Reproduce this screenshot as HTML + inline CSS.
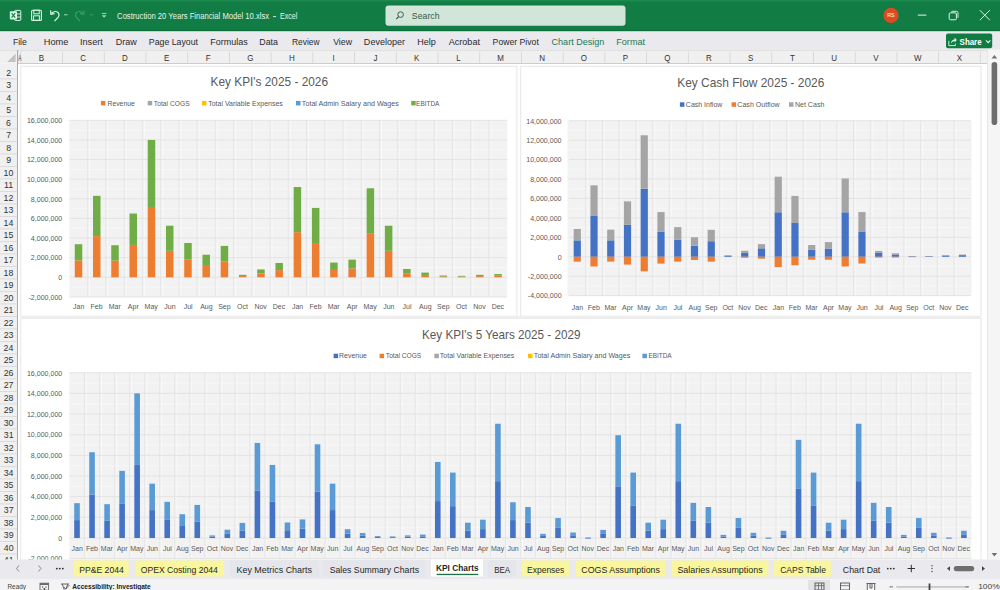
<!DOCTYPE html>
<html><head><meta charset="utf-8"><title>Excel</title>
<style>
html,body{margin:0;padding:0;width:1000px;height:590px;overflow:hidden;background:#fff;font-family:"Liberation Sans", sans-serif}
</style></head><body>
<svg width="1000" height="590" viewBox="0 0 1000 590" style="position:absolute;left:0;top:0;display:block">
<style>text{font-family:"Liberation Sans", sans-serif}</style>
<rect x="0.00" y="0.00" width="1000.00" height="590.00" fill="#ffffff"/>
<rect x="0.00" y="0.00" width="1000.00" height="31.00" fill="#117c43"/>
<rect x="0.00" y="0.00" width="1000.00" height="1.50" fill="#1a8a4f"/>
<rect x="0.00" y="30.20" width="1000.00" height="1.00" fill="#0b6a36"/>
<rect x="14.6" y="10.4" width="6.2" height="10" rx="0.8" fill="none" stroke="#d9f5e4" stroke-width="1"/>
<rect x="14.60" y="13.50" width="6.20" height="0.90" fill="#d9f5e4"/>
<rect x="14.60" y="16.60" width="6.20" height="0.90" fill="#d9f5e4"/>
<rect x="9.8" y="11.3" width="7.2" height="8.2" rx="1" fill="#d9f5e4"/>
<path d="M11.6 13.2 L15.2 17.6 M15.2 13.2 L11.6 17.6" stroke="#117c43" stroke-width="1.1"/>
<rect x="31.6" y="10.2" width="9.8" height="10.2" rx="1" fill="none" stroke="#d9f5e4" stroke-width="1.1"/>
<rect x="33.8" y="10.2" width="5.4" height="3.6" fill="none" stroke="#d9f5e4" stroke-width="1"/>
<rect x="33.6" y="15.8" width="5.8" height="4.6" fill="none" stroke="#d9f5e4" stroke-width="1"/>
<path d="M51.5 13.2 Q55 10.2 58 12.5 Q60.5 15.5 57 18.5 L54.5 21.2" fill="none" stroke="#d9f5e4" stroke-width="1.2"/>
<path d="M50.6 10.4 L50.9 14.2 L54.5 13.6" fill="none" stroke="#d9f5e4" stroke-width="1.2"/>
<rect x="64.00" y="14.30" width="3.60" height="1.00" fill="#9fd8b6"/>
<path d="M83 13.2 Q79.5 10.2 76.5 12.5 Q74 15.5 77.5 18.5 L80 21.2" fill="none" stroke="#3f9a68" stroke-width="1.2"/>
<path d="M84 10.4 L83.6 14.2 L80 13.6" fill="none" stroke="#3f9a68" stroke-width="1.2"/>
<rect x="89.80" y="14.30" width="3.40" height="1.00" fill="#3f9a68"/>
<rect x="101.80" y="13.00" width="4.60" height="0.90" fill="#a9dcbf"/>
<path d="M101.8 15.2 L106.4 15.2 L104.1 17.8 Z" fill="#a9dcbf"/>
<text x="117.12" y="19.00" font-size="8.99" fill="#e6f4ec" textLength="151.96" lengthAdjust="spacingAndGlyphs">Costruction 20 Years Financial Model 10.xlsx</text>
<rect x="273.00" y="16.20" width="3.00" height="0.90" fill="#e6f4ec"/>
<text x="279.93" y="19.00" font-size="8.99" fill="#e6f4ec" textLength="17.50" lengthAdjust="spacingAndGlyphs">Excel</text>
<rect x="385.5" y="5.6" width="240" height="20.2" rx="3" fill="#d2e5d9"/>
<circle cx="400.6" cy="14.6" r="2.8" fill="none" stroke="#3d5c49" stroke-width="1"/>
<path d="M398.6 16.6 L396.3 19" stroke="#3d5c49" stroke-width="1.1"/>
<text x="411.81" y="19.20" font-size="9.13" fill="#3d5c49" textLength="27.75" lengthAdjust="spacingAndGlyphs">Search</text>
<circle cx="891" cy="15.4" r="7.6" fill="#dd4b25"/>
<text x="887.17" y="17.30" font-size="5.22" fill="#ffffff" textLength="7.47" lengthAdjust="spacingAndGlyphs">RS</text>
<rect x="917.80" y="14.60" width="8.60" height="1.00" fill="#e6f4ec"/>
<rect x="949.2" y="12.8" width="7.2" height="7" rx="1.2" fill="none" stroke="#e6f4ec" stroke-width="1"/>
<path d="M951.4 11.3 L956.5 11.3 Q958 11.3 958 12.8 L958 17.8" fill="none" stroke="#e6f4ec" stroke-width="0.9"/>
<path d="M979.8 10.2 L989.8 20.2 M989.8 10.2 L979.8 20.2" stroke="#e6f4ec" stroke-width="1"/>
<rect x="0.00" y="31.20" width="1000.00" height="18.30" fill="#e9e9ee"/>
<rect x="0.00" y="31.20" width="1000.00" height="0.80" fill="#9fdcb9"/>
<text x="12.91" y="44.80" font-size="8.70" fill="#2b2b2b" textLength="13.84" lengthAdjust="spacingAndGlyphs">File</text>
<text x="43.76" y="44.80" font-size="8.70" fill="#2b2b2b" textLength="24.63" lengthAdjust="spacingAndGlyphs">Home</text>
<text x="79.97" y="44.80" font-size="8.70" fill="#2b2b2b" textLength="22.93" lengthAdjust="spacingAndGlyphs">Insert</text>
<text x="115.78" y="44.80" font-size="8.70" fill="#2b2b2b" textLength="21.01" lengthAdjust="spacingAndGlyphs">Draw</text>
<text x="148.80" y="44.80" font-size="8.70" fill="#2b2b2b" textLength="49.21" lengthAdjust="spacingAndGlyphs">Page Layout</text>
<text x="210.28" y="44.80" font-size="8.70" fill="#2b2b2b" textLength="37.51" lengthAdjust="spacingAndGlyphs">Formulas</text>
<text x="259.29" y="44.80" font-size="8.70" fill="#2b2b2b" textLength="18.68" lengthAdjust="spacingAndGlyphs">Data</text>
<text x="292.03" y="44.80" font-size="8.70" fill="#2b2b2b" textLength="27.46" lengthAdjust="spacingAndGlyphs">Review</text>
<text x="333.20" y="44.80" font-size="8.70" fill="#2b2b2b" textLength="18.80" lengthAdjust="spacingAndGlyphs">View</text>
<text x="363.88" y="44.80" font-size="8.70" fill="#2b2b2b" textLength="41.04" lengthAdjust="spacingAndGlyphs">Developer</text>
<text x="417.28" y="44.80" font-size="8.70" fill="#2b2b2b" textLength="18.60" lengthAdjust="spacingAndGlyphs">Help</text>
<text x="448.70" y="44.80" font-size="8.70" fill="#2b2b2b" textLength="31.31" lengthAdjust="spacingAndGlyphs">Acrobat</text>
<text x="492.61" y="44.80" font-size="8.70" fill="#2b2b2b" textLength="46.20" lengthAdjust="spacingAndGlyphs">Power Pivot</text>
<text x="551.55" y="44.80" font-size="8.70" fill="#217a55" textLength="52.81" lengthAdjust="spacingAndGlyphs">Chart Design</text>
<text x="616.27" y="44.80" font-size="8.70" fill="#217a55" textLength="28.75" lengthAdjust="spacingAndGlyphs">Format</text>
<rect x="946" y="33.6" width="46.2" height="14.7" rx="2" fill="#107c41"/>
<path d="M948.8 40.8 L948.8 45.6 L955.4 45.6 L955.4 43.6" fill="none" stroke="#d9f5e4" stroke-width="0.9"/>
<path d="M950.8 43.6 Q951.2 39.6 954.6 39.4 L954.6 37.6 L956.8 40 L954.6 42.4 L954.6 41 Q952.2 41 950.8 43.6 Z" fill="#d9f5e4"/>
<text x="959.60" y="44.70" font-size="8.99" fill="#ffffff" textLength="22.03" lengthAdjust="spacingAndGlyphs" font-weight="bold">Share</text>
<path d="M986 40.4 L988.2 42.6 L990.4 40.4" fill="none" stroke="#e6f7ec" stroke-width="1.2"/>
<rect x="0.00" y="49.50" width="1000.00" height="14.10" fill="#f0f0f0"/>
<rect x="0.00" y="49.50" width="1000.00" height="1.60" fill="#e2e2e2"/>
<rect x="18.00" y="63.10" width="970.00" height="0.90" fill="#c8c8c8"/>
<text x="38.79" y="60.80" font-size="8.41" fill="#333333" textLength="5.33" lengthAdjust="spacingAndGlyphs">B</text>
<rect x="62.12" y="51.50" width="0.80" height="12.00" fill="#d4d4d4"/>
<text x="80.35" y="60.80" font-size="8.41" fill="#333333" textLength="5.77" lengthAdjust="spacingAndGlyphs">C</text>
<rect x="103.84" y="51.50" width="0.80" height="12.00" fill="#d4d4d4"/>
<text x="121.99" y="60.80" font-size="8.41" fill="#333333" textLength="5.77" lengthAdjust="spacingAndGlyphs">D</text>
<rect x="145.56" y="51.50" width="0.80" height="12.00" fill="#d4d4d4"/>
<text x="163.91" y="60.80" font-size="8.41" fill="#333333" textLength="5.33" lengthAdjust="spacingAndGlyphs">E</text>
<rect x="187.28" y="51.50" width="0.80" height="12.00" fill="#d4d4d4"/>
<text x="205.82" y="60.80" font-size="8.41" fill="#333333" textLength="4.88" lengthAdjust="spacingAndGlyphs">F</text>
<rect x="229.00" y="51.50" width="0.80" height="12.00" fill="#d4d4d4"/>
<text x="247.15" y="60.80" font-size="8.41" fill="#333333" textLength="6.21" lengthAdjust="spacingAndGlyphs">G</text>
<rect x="270.72" y="51.50" width="0.80" height="12.00" fill="#d4d4d4"/>
<text x="288.99" y="60.80" font-size="8.41" fill="#333333" textLength="5.77" lengthAdjust="spacingAndGlyphs">H</text>
<rect x="312.44" y="51.50" width="0.80" height="12.00" fill="#d4d4d4"/>
<text x="332.48" y="60.80" font-size="8.41" fill="#333333" textLength="2.22" lengthAdjust="spacingAndGlyphs">I</text>
<rect x="354.16" y="51.50" width="0.80" height="12.00" fill="#d4d4d4"/>
<text x="373.54" y="60.80" font-size="8.41" fill="#333333" textLength="3.99" lengthAdjust="spacingAndGlyphs">J</text>
<rect x="395.88" y="51.50" width="0.80" height="12.00" fill="#d4d4d4"/>
<text x="414.09" y="60.80" font-size="8.41" fill="#333333" textLength="5.33" lengthAdjust="spacingAndGlyphs">K</text>
<rect x="437.60" y="51.50" width="0.80" height="12.00" fill="#d4d4d4"/>
<text x="456.34" y="60.80" font-size="8.41" fill="#333333" textLength="4.44" lengthAdjust="spacingAndGlyphs">L</text>
<rect x="479.32" y="51.50" width="0.80" height="12.00" fill="#d4d4d4"/>
<text x="497.15" y="60.80" font-size="8.41" fill="#333333" textLength="6.65" lengthAdjust="spacingAndGlyphs">M</text>
<rect x="521.04" y="51.50" width="0.80" height="12.00" fill="#d4d4d4"/>
<text x="539.31" y="60.80" font-size="8.41" fill="#333333" textLength="5.77" lengthAdjust="spacingAndGlyphs">N</text>
<rect x="562.76" y="51.50" width="0.80" height="12.00" fill="#d4d4d4"/>
<text x="580.83" y="60.80" font-size="8.41" fill="#333333" textLength="6.21" lengthAdjust="spacingAndGlyphs">O</text>
<rect x="604.48" y="51.50" width="0.80" height="12.00" fill="#d4d4d4"/>
<text x="622.87" y="60.80" font-size="8.41" fill="#333333" textLength="5.33" lengthAdjust="spacingAndGlyphs">P</text>
<rect x="646.20" y="51.50" width="0.80" height="12.00" fill="#d4d4d4"/>
<text x="664.27" y="60.80" font-size="8.41" fill="#333333" textLength="6.21" lengthAdjust="spacingAndGlyphs">Q</text>
<rect x="687.92" y="51.50" width="0.80" height="12.00" fill="#d4d4d4"/>
<text x="706.05" y="60.80" font-size="8.41" fill="#333333" textLength="5.77" lengthAdjust="spacingAndGlyphs">R</text>
<rect x="729.64" y="51.50" width="0.80" height="12.00" fill="#d4d4d4"/>
<text x="748.12" y="60.80" font-size="8.41" fill="#333333" textLength="5.33" lengthAdjust="spacingAndGlyphs">S</text>
<rect x="771.36" y="51.50" width="0.80" height="12.00" fill="#d4d4d4"/>
<text x="790.08" y="60.80" font-size="8.41" fill="#333333" textLength="4.88" lengthAdjust="spacingAndGlyphs">T</text>
<rect x="813.08" y="51.50" width="0.80" height="12.00" fill="#d4d4d4"/>
<text x="831.37" y="60.80" font-size="8.41" fill="#333333" textLength="5.77" lengthAdjust="spacingAndGlyphs">U</text>
<rect x="854.80" y="51.50" width="0.80" height="12.00" fill="#d4d4d4"/>
<text x="873.30" y="60.80" font-size="8.41" fill="#333333" textLength="5.33" lengthAdjust="spacingAndGlyphs">V</text>
<rect x="896.52" y="51.50" width="0.80" height="12.00" fill="#d4d4d4"/>
<text x="913.91" y="60.80" font-size="8.41" fill="#333333" textLength="7.54" lengthAdjust="spacingAndGlyphs">W</text>
<rect x="938.24" y="51.50" width="0.80" height="12.00" fill="#d4d4d4"/>
<text x="956.72" y="60.80" font-size="8.41" fill="#333333" textLength="5.33" lengthAdjust="spacingAndGlyphs">X</text>
<rect x="979.96" y="51.50" width="0.80" height="12.00" fill="#d4d4d4"/>
<rect x="20.40" y="51.50" width="0.80" height="12.00" fill="#d4d4d4"/>
<path d="M15.6 53.5 L15.6 62 L7.2 62 Z" fill="#c2c2c2"/>
<text x="18.30" y="60.80" font-size="8.41" fill="#333333" textLength="3.21" lengthAdjust="spacingAndGlyphs">A</text>
<rect x="0.00" y="63.60" width="17.80" height="496.00" fill="#f0f0f0"/>
<rect x="17.20" y="50.00" width="0.90" height="510.00" fill="#9a9a9a"/>
<text x="6.13" y="75.70" font-size="9.28" fill="#333333" textLength="4.90" lengthAdjust="spacingAndGlyphs">2</text>
<rect x="0.00" y="78.50" width="17.20" height="0.80" fill="#d6d6d6"/>
<text x="6.18" y="88.20" font-size="9.28" fill="#333333" textLength="4.90" lengthAdjust="spacingAndGlyphs">3</text>
<rect x="0.00" y="91.00" width="17.20" height="0.80" fill="#d6d6d6"/>
<text x="6.18" y="100.70" font-size="9.28" fill="#333333" textLength="4.90" lengthAdjust="spacingAndGlyphs">4</text>
<rect x="0.00" y="103.50" width="17.20" height="0.80" fill="#d6d6d6"/>
<text x="6.15" y="113.20" font-size="9.28" fill="#333333" textLength="4.90" lengthAdjust="spacingAndGlyphs">5</text>
<rect x="0.00" y="116.00" width="17.20" height="0.80" fill="#d6d6d6"/>
<text x="6.11" y="125.70" font-size="9.28" fill="#333333" textLength="4.90" lengthAdjust="spacingAndGlyphs">6</text>
<rect x="0.00" y="128.50" width="17.20" height="0.80" fill="#d6d6d6"/>
<text x="6.13" y="138.20" font-size="9.28" fill="#333333" textLength="4.90" lengthAdjust="spacingAndGlyphs">7</text>
<rect x="0.00" y="141.00" width="17.20" height="0.80" fill="#d6d6d6"/>
<text x="6.15" y="150.70" font-size="9.28" fill="#333333" textLength="4.90" lengthAdjust="spacingAndGlyphs">8</text>
<rect x="0.00" y="153.50" width="17.20" height="0.80" fill="#d6d6d6"/>
<text x="6.15" y="163.20" font-size="9.28" fill="#333333" textLength="4.90" lengthAdjust="spacingAndGlyphs">9</text>
<rect x="0.00" y="166.00" width="17.20" height="0.80" fill="#d6d6d6"/>
<text x="3.53" y="175.70" font-size="9.28" fill="#333333" textLength="9.80" lengthAdjust="spacingAndGlyphs">10</text>
<rect x="0.00" y="178.50" width="17.20" height="0.80" fill="#d6d6d6"/>
<text x="3.91" y="188.20" font-size="9.28" fill="#333333" textLength="9.15" lengthAdjust="spacingAndGlyphs">11</text>
<rect x="0.00" y="191.00" width="17.20" height="0.80" fill="#d6d6d6"/>
<text x="3.58" y="200.70" font-size="9.28" fill="#333333" textLength="9.80" lengthAdjust="spacingAndGlyphs">12</text>
<rect x="0.00" y="203.50" width="17.20" height="0.80" fill="#d6d6d6"/>
<text x="3.56" y="213.20" font-size="9.28" fill="#333333" textLength="9.80" lengthAdjust="spacingAndGlyphs">13</text>
<rect x="0.00" y="216.00" width="17.20" height="0.80" fill="#d6d6d6"/>
<text x="3.49" y="225.70" font-size="9.28" fill="#333333" textLength="9.80" lengthAdjust="spacingAndGlyphs">14</text>
<rect x="0.00" y="228.50" width="17.20" height="0.80" fill="#d6d6d6"/>
<text x="3.56" y="238.20" font-size="9.28" fill="#333333" textLength="9.80" lengthAdjust="spacingAndGlyphs">15</text>
<rect x="0.00" y="241.00" width="17.20" height="0.80" fill="#d6d6d6"/>
<text x="3.56" y="250.70" font-size="9.28" fill="#333333" textLength="9.80" lengthAdjust="spacingAndGlyphs">16</text>
<rect x="0.00" y="253.50" width="17.20" height="0.80" fill="#d6d6d6"/>
<text x="3.58" y="263.20" font-size="9.28" fill="#333333" textLength="9.80" lengthAdjust="spacingAndGlyphs">17</text>
<rect x="0.00" y="266.00" width="17.20" height="0.80" fill="#d6d6d6"/>
<text x="3.56" y="275.70" font-size="9.28" fill="#333333" textLength="9.80" lengthAdjust="spacingAndGlyphs">18</text>
<rect x="0.00" y="278.50" width="17.20" height="0.80" fill="#d6d6d6"/>
<text x="3.58" y="288.20" font-size="9.28" fill="#333333" textLength="9.80" lengthAdjust="spacingAndGlyphs">19</text>
<rect x="0.00" y="291.00" width="17.20" height="0.80" fill="#d6d6d6"/>
<text x="3.64" y="300.70" font-size="9.28" fill="#333333" textLength="9.80" lengthAdjust="spacingAndGlyphs">20</text>
<rect x="0.00" y="303.50" width="17.20" height="0.80" fill="#d6d6d6"/>
<text x="3.69" y="313.20" font-size="9.28" fill="#333333" textLength="9.80" lengthAdjust="spacingAndGlyphs">21</text>
<rect x="0.00" y="316.00" width="17.20" height="0.80" fill="#d6d6d6"/>
<text x="3.69" y="325.70" font-size="9.28" fill="#333333" textLength="9.80" lengthAdjust="spacingAndGlyphs">22</text>
<rect x="0.00" y="328.50" width="17.20" height="0.80" fill="#d6d6d6"/>
<text x="3.67" y="338.20" font-size="9.28" fill="#333333" textLength="9.80" lengthAdjust="spacingAndGlyphs">23</text>
<rect x="0.00" y="341.00" width="17.20" height="0.80" fill="#d6d6d6"/>
<text x="3.60" y="350.70" font-size="9.28" fill="#333333" textLength="9.80" lengthAdjust="spacingAndGlyphs">24</text>
<rect x="0.00" y="353.50" width="17.20" height="0.80" fill="#d6d6d6"/>
<text x="3.67" y="363.20" font-size="9.28" fill="#333333" textLength="9.80" lengthAdjust="spacingAndGlyphs">25</text>
<rect x="0.00" y="366.00" width="17.20" height="0.80" fill="#d6d6d6"/>
<text x="3.67" y="375.70" font-size="9.28" fill="#333333" textLength="9.80" lengthAdjust="spacingAndGlyphs">26</text>
<rect x="0.00" y="378.50" width="17.20" height="0.80" fill="#d6d6d6"/>
<text x="3.69" y="388.20" font-size="9.28" fill="#333333" textLength="9.80" lengthAdjust="spacingAndGlyphs">27</text>
<rect x="0.00" y="391.00" width="17.20" height="0.80" fill="#d6d6d6"/>
<text x="3.67" y="400.70" font-size="9.28" fill="#333333" textLength="9.80" lengthAdjust="spacingAndGlyphs">28</text>
<rect x="0.00" y="403.50" width="17.20" height="0.80" fill="#d6d6d6"/>
<text x="3.69" y="413.20" font-size="9.28" fill="#333333" textLength="9.80" lengthAdjust="spacingAndGlyphs">29</text>
<rect x="0.00" y="416.00" width="17.20" height="0.80" fill="#d6d6d6"/>
<text x="3.71" y="425.70" font-size="9.28" fill="#333333" textLength="9.80" lengthAdjust="spacingAndGlyphs">30</text>
<rect x="0.00" y="428.50" width="17.20" height="0.80" fill="#d6d6d6"/>
<text x="3.75" y="438.20" font-size="9.28" fill="#333333" textLength="9.80" lengthAdjust="spacingAndGlyphs">31</text>
<rect x="0.00" y="441.00" width="17.20" height="0.80" fill="#d6d6d6"/>
<text x="3.75" y="450.70" font-size="9.28" fill="#333333" textLength="9.80" lengthAdjust="spacingAndGlyphs">32</text>
<rect x="0.00" y="453.50" width="17.20" height="0.80" fill="#d6d6d6"/>
<text x="3.73" y="463.20" font-size="9.28" fill="#333333" textLength="9.80" lengthAdjust="spacingAndGlyphs">33</text>
<rect x="0.00" y="466.00" width="17.20" height="0.80" fill="#d6d6d6"/>
<text x="3.67" y="475.70" font-size="9.28" fill="#333333" textLength="9.80" lengthAdjust="spacingAndGlyphs">34</text>
<rect x="0.00" y="478.50" width="17.20" height="0.80" fill="#d6d6d6"/>
<text x="3.73" y="488.20" font-size="9.28" fill="#333333" textLength="9.80" lengthAdjust="spacingAndGlyphs">35</text>
<rect x="0.00" y="491.00" width="17.20" height="0.80" fill="#d6d6d6"/>
<text x="3.73" y="500.70" font-size="9.28" fill="#333333" textLength="9.80" lengthAdjust="spacingAndGlyphs">36</text>
<rect x="0.00" y="503.50" width="17.20" height="0.80" fill="#d6d6d6"/>
<text x="3.75" y="513.20" font-size="9.28" fill="#333333" textLength="9.80" lengthAdjust="spacingAndGlyphs">37</text>
<rect x="0.00" y="516.00" width="17.20" height="0.80" fill="#d6d6d6"/>
<text x="3.73" y="525.70" font-size="9.28" fill="#333333" textLength="9.80" lengthAdjust="spacingAndGlyphs">38</text>
<rect x="0.00" y="528.50" width="17.20" height="0.80" fill="#d6d6d6"/>
<text x="3.75" y="538.20" font-size="9.28" fill="#333333" textLength="9.80" lengthAdjust="spacingAndGlyphs">39</text>
<rect x="0.00" y="541.00" width="17.20" height="0.80" fill="#d6d6d6"/>
<text x="3.78" y="550.70" font-size="9.28" fill="#333333" textLength="9.80" lengthAdjust="spacingAndGlyphs">40</text>
<rect x="0.00" y="553.50" width="17.20" height="0.80" fill="#d6d6d6"/>
<text x="3.82" y="563.20" font-size="9.28" fill="#333333" textLength="9.80" lengthAdjust="spacingAndGlyphs">41</text>
<rect x="0.00" y="566.00" width="17.20" height="0.80" fill="#d6d6d6"/>
<rect x="18.20" y="64.00" width="970.00" height="496.00" fill="#ffffff"/>
<rect x="20.7" y="66.3" width="496.2" height="250" fill="#ffffff" stroke="#e6e6e6" stroke-width="1"/>
<rect x="520.7" y="66.3" width="460.3" height="250" fill="#ffffff" stroke="#e6e6e6" stroke-width="1"/>
<rect x="20.7" y="318.5" width="960.3" height="260" fill="#ffffff" stroke="#e6e6e6" stroke-width="1"/>
<rect x="21.00" y="316.20" width="960.00" height="2.60" fill="#eeeeee"/>
<text x="210.55" y="85.70" font-size="13.62" fill="#595959" textLength="117.42" lengthAdjust="spacingAndGlyphs">Key KPI's 2025 - 2026</text>
<rect x="100.90" y="100.90" width="4.50" height="4.50" fill="#ed7d31"/>
<text x="107.45" y="105.60" font-size="7.10" fill="#595959" textLength="27.44" lengthAdjust="spacingAndGlyphs">Revenue</text>
<rect x="147.70" y="100.90" width="4.50" height="4.50" fill="#a5a5a5"/>
<text x="153.87" y="105.60" font-size="7.10" fill="#595959" textLength="35.80" lengthAdjust="spacingAndGlyphs">Total COGS</text>
<rect x="202.00" y="100.90" width="4.50" height="4.50" fill="#ffc000"/>
<text x="208.16" y="105.60" font-size="7.10" fill="#595959" textLength="74.68" lengthAdjust="spacingAndGlyphs">Total Variable Expenses</text>
<rect x="296.00" y="100.90" width="4.50" height="4.50" fill="#5b9bd5"/>
<text x="301.86" y="105.60" font-size="7.10" fill="#595959" textLength="97.00" lengthAdjust="spacingAndGlyphs">Total Admin Salary and Wages</text>
<rect x="411.20" y="100.90" width="4.50" height="4.50" fill="#70ad47"/>
<text x="416.08" y="105.60" font-size="7.10" fill="#595959" textLength="23.33" lengthAdjust="spacingAndGlyphs">EBITDA</text>
<rect x="69.40" y="120.30" width="437.80" height="176.62" fill="#f2f2f2"/>
<rect x="69.40" y="286.61" width="437.80" height="1.00" fill="#f7f7f7"/>
<rect x="69.40" y="266.99" width="437.80" height="1.00" fill="#f7f7f7"/>
<rect x="69.40" y="247.36" width="437.80" height="1.00" fill="#f7f7f7"/>
<rect x="69.40" y="227.74" width="437.80" height="1.00" fill="#f7f7f7"/>
<rect x="69.40" y="208.11" width="437.80" height="1.00" fill="#f7f7f7"/>
<rect x="69.40" y="188.49" width="437.80" height="1.00" fill="#f7f7f7"/>
<rect x="69.40" y="168.86" width="437.80" height="1.00" fill="#f7f7f7"/>
<rect x="69.40" y="149.24" width="437.80" height="1.00" fill="#f7f7f7"/>
<rect x="69.40" y="129.61" width="437.80" height="1.00" fill="#f7f7f7"/>
<rect x="87.14" y="120.30" width="1.00" height="176.62" fill="#e6e6e6"/>
<rect x="89.14" y="120.30" width="1.00" height="176.62" fill="#f8f8f8"/>
<rect x="105.38" y="120.30" width="1.00" height="176.62" fill="#e6e6e6"/>
<rect x="107.38" y="120.30" width="1.00" height="176.62" fill="#f8f8f8"/>
<rect x="123.62" y="120.30" width="1.00" height="176.62" fill="#e6e6e6"/>
<rect x="125.62" y="120.30" width="1.00" height="176.62" fill="#f8f8f8"/>
<rect x="141.87" y="120.30" width="1.00" height="176.62" fill="#e6e6e6"/>
<rect x="143.87" y="120.30" width="1.00" height="176.62" fill="#f8f8f8"/>
<rect x="160.11" y="120.30" width="1.00" height="176.62" fill="#e6e6e6"/>
<rect x="162.11" y="120.30" width="1.00" height="176.62" fill="#f8f8f8"/>
<rect x="178.35" y="120.30" width="1.00" height="176.62" fill="#e6e6e6"/>
<rect x="180.35" y="120.30" width="1.00" height="176.62" fill="#f8f8f8"/>
<rect x="196.59" y="120.30" width="1.00" height="176.62" fill="#e6e6e6"/>
<rect x="198.59" y="120.30" width="1.00" height="176.62" fill="#f8f8f8"/>
<rect x="214.83" y="120.30" width="1.00" height="176.62" fill="#e6e6e6"/>
<rect x="216.83" y="120.30" width="1.00" height="176.62" fill="#f8f8f8"/>
<rect x="233.07" y="120.30" width="1.00" height="176.62" fill="#e6e6e6"/>
<rect x="235.07" y="120.30" width="1.00" height="176.62" fill="#f8f8f8"/>
<rect x="251.32" y="120.30" width="1.00" height="176.62" fill="#e6e6e6"/>
<rect x="253.32" y="120.30" width="1.00" height="176.62" fill="#f8f8f8"/>
<rect x="269.56" y="120.30" width="1.00" height="176.62" fill="#e6e6e6"/>
<rect x="271.56" y="120.30" width="1.00" height="176.62" fill="#f8f8f8"/>
<rect x="287.80" y="120.30" width="1.00" height="176.62" fill="#e6e6e6"/>
<rect x="289.80" y="120.30" width="1.00" height="176.62" fill="#f8f8f8"/>
<rect x="306.04" y="120.30" width="1.00" height="176.62" fill="#e6e6e6"/>
<rect x="308.04" y="120.30" width="1.00" height="176.62" fill="#f8f8f8"/>
<rect x="324.28" y="120.30" width="1.00" height="176.62" fill="#e6e6e6"/>
<rect x="326.28" y="120.30" width="1.00" height="176.62" fill="#f8f8f8"/>
<rect x="342.52" y="120.30" width="1.00" height="176.62" fill="#e6e6e6"/>
<rect x="344.52" y="120.30" width="1.00" height="176.62" fill="#f8f8f8"/>
<rect x="360.77" y="120.30" width="1.00" height="176.62" fill="#e6e6e6"/>
<rect x="362.77" y="120.30" width="1.00" height="176.62" fill="#f8f8f8"/>
<rect x="379.01" y="120.30" width="1.00" height="176.62" fill="#e6e6e6"/>
<rect x="381.01" y="120.30" width="1.00" height="176.62" fill="#f8f8f8"/>
<rect x="397.25" y="120.30" width="1.00" height="176.62" fill="#e6e6e6"/>
<rect x="399.25" y="120.30" width="1.00" height="176.62" fill="#f8f8f8"/>
<rect x="415.49" y="120.30" width="1.00" height="176.62" fill="#e6e6e6"/>
<rect x="417.49" y="120.30" width="1.00" height="176.62" fill="#f8f8f8"/>
<rect x="433.73" y="120.30" width="1.00" height="176.62" fill="#e6e6e6"/>
<rect x="435.73" y="120.30" width="1.00" height="176.62" fill="#f8f8f8"/>
<rect x="451.97" y="120.30" width="1.00" height="176.62" fill="#e6e6e6"/>
<rect x="453.97" y="120.30" width="1.00" height="176.62" fill="#f8f8f8"/>
<rect x="470.22" y="120.30" width="1.00" height="176.62" fill="#e6e6e6"/>
<rect x="472.22" y="120.30" width="1.00" height="176.62" fill="#f8f8f8"/>
<rect x="488.46" y="120.30" width="1.00" height="176.62" fill="#e6e6e6"/>
<rect x="490.46" y="120.30" width="1.00" height="176.62" fill="#f8f8f8"/>
<rect x="69.40" y="296.43" width="437.80" height="1.00" fill="#e3e3e3"/>
<text x="28.50" y="299.73" font-size="8.12" fill="#595959" textLength="33.76" lengthAdjust="spacingAndGlyphs">-2,000,000</text>
<rect x="69.40" y="276.80" width="437.80" height="1.00" fill="#e3e3e3"/>
<text x="58.33" y="280.10" font-size="8.12" fill="#595959" textLength="3.93" lengthAdjust="spacingAndGlyphs">0</text>
<rect x="69.40" y="257.18" width="437.80" height="1.00" fill="#e3e3e3"/>
<text x="30.83" y="260.48" font-size="8.12" fill="#595959" textLength="31.41" lengthAdjust="spacingAndGlyphs">2,000,000</text>
<rect x="69.40" y="237.55" width="437.80" height="1.00" fill="#e3e3e3"/>
<text x="30.83" y="240.85" font-size="8.12" fill="#595959" textLength="31.41" lengthAdjust="spacingAndGlyphs">4,000,000</text>
<rect x="69.40" y="217.93" width="437.80" height="1.00" fill="#e3e3e3"/>
<text x="30.83" y="221.23" font-size="8.12" fill="#595959" textLength="31.41" lengthAdjust="spacingAndGlyphs">6,000,000</text>
<rect x="69.40" y="198.30" width="437.80" height="1.00" fill="#e3e3e3"/>
<text x="30.83" y="201.60" font-size="8.12" fill="#595959" textLength="31.41" lengthAdjust="spacingAndGlyphs">8,000,000</text>
<rect x="69.40" y="178.68" width="437.80" height="1.00" fill="#e3e3e3"/>
<text x="26.91" y="181.98" font-size="8.12" fill="#595959" textLength="35.34" lengthAdjust="spacingAndGlyphs">10,000,000</text>
<rect x="69.40" y="159.05" width="437.80" height="1.00" fill="#e3e3e3"/>
<text x="26.91" y="162.35" font-size="8.12" fill="#595959" textLength="35.34" lengthAdjust="spacingAndGlyphs">12,000,000</text>
<rect x="69.40" y="139.43" width="437.80" height="1.00" fill="#e3e3e3"/>
<text x="26.91" y="142.73" font-size="8.12" fill="#595959" textLength="35.34" lengthAdjust="spacingAndGlyphs">14,000,000</text>
<rect x="69.40" y="119.80" width="437.80" height="1.00" fill="#e3e3e3"/>
<text x="26.91" y="123.10" font-size="8.12" fill="#595959" textLength="35.34" lengthAdjust="spacingAndGlyphs">16,000,000</text>
<rect x="74.77" y="260.32" width="7.50" height="16.98" fill="#ed7d31"/>
<rect x="74.77" y="244.23" width="7.50" height="16.09" fill="#70ad47"/>
<rect x="93.01" y="236.09" width="7.50" height="41.21" fill="#ed7d31"/>
<rect x="93.01" y="195.86" width="7.50" height="40.23" fill="#70ad47"/>
<rect x="111.25" y="260.62" width="7.50" height="16.68" fill="#ed7d31"/>
<rect x="111.25" y="245.21" width="7.50" height="15.41" fill="#70ad47"/>
<rect x="129.50" y="244.92" width="7.50" height="32.38" fill="#ed7d31"/>
<rect x="129.50" y="213.52" width="7.50" height="31.40" fill="#70ad47"/>
<rect x="147.74" y="207.93" width="7.50" height="69.37" fill="#ed7d31"/>
<rect x="147.74" y="139.93" width="7.50" height="68.00" fill="#70ad47"/>
<rect x="165.98" y="250.81" width="7.50" height="26.49" fill="#ed7d31"/>
<rect x="165.98" y="225.69" width="7.50" height="25.12" fill="#70ad47"/>
<rect x="184.22" y="259.64" width="7.50" height="17.66" fill="#ed7d31"/>
<rect x="184.22" y="242.96" width="7.50" height="16.68" fill="#70ad47"/>
<rect x="202.46" y="265.92" width="7.50" height="11.38" fill="#ed7d31"/>
<rect x="202.46" y="254.73" width="7.50" height="11.19" fill="#70ad47"/>
<rect x="220.70" y="261.60" width="7.50" height="15.70" fill="#ed7d31"/>
<rect x="220.70" y="245.90" width="7.50" height="15.70" fill="#70ad47"/>
<rect x="238.95" y="276.12" width="7.50" height="1.18" fill="#ed7d31"/>
<rect x="238.95" y="274.85" width="7.50" height="1.28" fill="#70ad47"/>
<rect x="257.19" y="273.38" width="7.50" height="3.93" fill="#ed7d31"/>
<rect x="257.19" y="269.45" width="7.50" height="3.93" fill="#70ad47"/>
<rect x="275.43" y="270.14" width="7.50" height="7.16" fill="#ed7d31"/>
<rect x="275.43" y="262.97" width="7.50" height="7.16" fill="#70ad47"/>
<rect x="293.67" y="232.16" width="7.50" height="45.14" fill="#ed7d31"/>
<rect x="293.67" y="187.03" width="7.50" height="45.14" fill="#70ad47"/>
<rect x="311.91" y="242.96" width="7.50" height="34.34" fill="#ed7d31"/>
<rect x="311.91" y="207.93" width="7.50" height="35.03" fill="#70ad47"/>
<rect x="330.15" y="269.94" width="7.50" height="7.36" fill="#ed7d31"/>
<rect x="330.15" y="262.58" width="7.50" height="7.36" fill="#70ad47"/>
<rect x="348.40" y="268.47" width="7.50" height="8.83" fill="#ed7d31"/>
<rect x="348.40" y="259.64" width="7.50" height="8.83" fill="#70ad47"/>
<rect x="366.64" y="233.14" width="7.50" height="44.16" fill="#ed7d31"/>
<rect x="366.64" y="188.30" width="7.50" height="44.84" fill="#70ad47"/>
<rect x="384.88" y="250.81" width="7.50" height="26.49" fill="#ed7d31"/>
<rect x="384.88" y="225.69" width="7.50" height="25.12" fill="#70ad47"/>
<rect x="403.12" y="273.18" width="7.50" height="4.12" fill="#ed7d31"/>
<rect x="403.12" y="268.96" width="7.50" height="4.22" fill="#70ad47"/>
<rect x="421.36" y="274.94" width="7.50" height="2.36" fill="#ed7d31"/>
<rect x="421.36" y="272.59" width="7.50" height="2.35" fill="#70ad47"/>
<rect x="439.60" y="276.42" width="7.50" height="0.88" fill="#ed7d31"/>
<rect x="439.60" y="275.53" width="7.50" height="0.88" fill="#70ad47"/>
<rect x="457.85" y="276.51" width="7.50" height="0.79" fill="#ed7d31"/>
<rect x="457.85" y="275.83" width="7.50" height="0.69" fill="#70ad47"/>
<rect x="476.09" y="276.12" width="7.50" height="1.18" fill="#ed7d31"/>
<rect x="476.09" y="274.85" width="7.50" height="1.28" fill="#70ad47"/>
<rect x="494.33" y="275.73" width="7.50" height="1.57" fill="#ed7d31"/>
<rect x="494.33" y="274.06" width="7.50" height="1.67" fill="#70ad47"/>
<text x="73.04" y="309.40" font-size="7.54" fill="#595959" textLength="11.30" lengthAdjust="spacingAndGlyphs">Jan</text>
<text x="90.59" y="309.40" font-size="7.54" fill="#595959" textLength="12.08" lengthAdjust="spacingAndGlyphs">Feb</text>
<text x="108.73" y="309.40" font-size="7.54" fill="#595959" textLength="12.07" lengthAdjust="spacingAndGlyphs">Mar</text>
<text x="127.83" y="309.40" font-size="7.54" fill="#595959" textLength="10.91" lengthAdjust="spacingAndGlyphs">Apr</text>
<text x="144.58" y="309.40" font-size="7.54" fill="#595959" textLength="13.24" lengthAdjust="spacingAndGlyphs">May</text>
<text x="164.24" y="309.40" font-size="7.54" fill="#595959" textLength="11.30" lengthAdjust="spacingAndGlyphs">Jun</text>
<text x="183.66" y="309.40" font-size="7.54" fill="#595959" textLength="8.96" lengthAdjust="spacingAndGlyphs">Jul</text>
<text x="200.19" y="309.40" font-size="7.54" fill="#595959" textLength="12.47" lengthAdjust="spacingAndGlyphs">Aug</text>
<text x="218.20" y="309.40" font-size="7.54" fill="#595959" textLength="12.47" lengthAdjust="spacingAndGlyphs">Sep</text>
<text x="237.09" y="309.40" font-size="7.54" fill="#595959" textLength="10.90" lengthAdjust="spacingAndGlyphs">Oct</text>
<text x="254.42" y="309.40" font-size="7.54" fill="#595959" textLength="12.46" lengthAdjust="spacingAndGlyphs">Nov</text>
<text x="272.75" y="309.40" font-size="7.54" fill="#595959" textLength="12.46" lengthAdjust="spacingAndGlyphs">Dec</text>
<text x="291.94" y="309.40" font-size="7.54" fill="#595959" textLength="11.30" lengthAdjust="spacingAndGlyphs">Jan</text>
<text x="309.49" y="309.40" font-size="7.54" fill="#595959" textLength="12.08" lengthAdjust="spacingAndGlyphs">Feb</text>
<text x="327.63" y="309.40" font-size="7.54" fill="#595959" textLength="12.07" lengthAdjust="spacingAndGlyphs">Mar</text>
<text x="346.73" y="309.40" font-size="7.54" fill="#595959" textLength="10.91" lengthAdjust="spacingAndGlyphs">Apr</text>
<text x="363.48" y="309.40" font-size="7.54" fill="#595959" textLength="13.24" lengthAdjust="spacingAndGlyphs">May</text>
<text x="383.14" y="309.40" font-size="7.54" fill="#595959" textLength="11.30" lengthAdjust="spacingAndGlyphs">Jun</text>
<text x="402.56" y="309.40" font-size="7.54" fill="#595959" textLength="8.96" lengthAdjust="spacingAndGlyphs">Jul</text>
<text x="419.09" y="309.40" font-size="7.54" fill="#595959" textLength="12.47" lengthAdjust="spacingAndGlyphs">Aug</text>
<text x="437.10" y="309.40" font-size="7.54" fill="#595959" textLength="12.47" lengthAdjust="spacingAndGlyphs">Sep</text>
<text x="455.99" y="309.40" font-size="7.54" fill="#595959" textLength="10.90" lengthAdjust="spacingAndGlyphs">Oct</text>
<text x="473.32" y="309.40" font-size="7.54" fill="#595959" textLength="12.46" lengthAdjust="spacingAndGlyphs">Nov</text>
<text x="491.65" y="309.40" font-size="7.54" fill="#595959" textLength="12.46" lengthAdjust="spacingAndGlyphs">Dec</text>
<text x="677.25" y="87.00" font-size="13.48" fill="#595959" textLength="147.14" lengthAdjust="spacingAndGlyphs">Key Cash Flow 2025 - 2026</text>
<rect x="679.90" y="102.30" width="4.50" height="4.50" fill="#4472c4"/>
<text x="685.85" y="107.00" font-size="7.10" fill="#595959" textLength="36.51" lengthAdjust="spacingAndGlyphs">Cash Inflow</text>
<rect x="731.60" y="102.30" width="4.50" height="4.50" fill="#ed7d31"/>
<text x="737.35" y="107.00" font-size="7.10" fill="#595959" textLength="42.34" lengthAdjust="spacingAndGlyphs">Cash Outflow</text>
<rect x="789.00" y="102.30" width="4.50" height="4.50" fill="#a5a5a5"/>
<text x="794.94" y="107.00" font-size="7.10" fill="#595959" textLength="29.41" lengthAdjust="spacingAndGlyphs">Net Cash</text>
<rect x="567.50" y="120.70" width="404.00" height="174.96" fill="#f2f2f2"/>
<rect x="568.90" y="285.44" width="401.90" height="1.00" fill="#f7f7f7"/>
<rect x="568.90" y="266.00" width="401.90" height="1.00" fill="#f7f7f7"/>
<rect x="568.90" y="246.56" width="401.90" height="1.00" fill="#f7f7f7"/>
<rect x="568.90" y="227.12" width="401.90" height="1.00" fill="#f7f7f7"/>
<rect x="568.90" y="207.68" width="401.90" height="1.00" fill="#f7f7f7"/>
<rect x="568.90" y="188.24" width="401.90" height="1.00" fill="#f7f7f7"/>
<rect x="568.90" y="168.80" width="401.90" height="1.00" fill="#f7f7f7"/>
<rect x="568.90" y="149.36" width="401.90" height="1.00" fill="#f7f7f7"/>
<rect x="568.90" y="129.92" width="401.90" height="1.00" fill="#f7f7f7"/>
<rect x="585.15" y="120.70" width="1.00" height="174.96" fill="#e6e6e6"/>
<rect x="587.15" y="120.70" width="1.00" height="174.96" fill="#f8f8f8"/>
<rect x="601.89" y="120.70" width="1.00" height="174.96" fill="#e6e6e6"/>
<rect x="603.89" y="120.70" width="1.00" height="174.96" fill="#f8f8f8"/>
<rect x="618.64" y="120.70" width="1.00" height="174.96" fill="#e6e6e6"/>
<rect x="620.64" y="120.70" width="1.00" height="174.96" fill="#f8f8f8"/>
<rect x="635.38" y="120.70" width="1.00" height="174.96" fill="#e6e6e6"/>
<rect x="637.38" y="120.70" width="1.00" height="174.96" fill="#f8f8f8"/>
<rect x="652.13" y="120.70" width="1.00" height="174.96" fill="#e6e6e6"/>
<rect x="654.13" y="120.70" width="1.00" height="174.96" fill="#f8f8f8"/>
<rect x="668.88" y="120.70" width="1.00" height="174.96" fill="#e6e6e6"/>
<rect x="670.88" y="120.70" width="1.00" height="174.96" fill="#f8f8f8"/>
<rect x="685.62" y="120.70" width="1.00" height="174.96" fill="#e6e6e6"/>
<rect x="687.62" y="120.70" width="1.00" height="174.96" fill="#f8f8f8"/>
<rect x="702.37" y="120.70" width="1.00" height="174.96" fill="#e6e6e6"/>
<rect x="704.37" y="120.70" width="1.00" height="174.96" fill="#f8f8f8"/>
<rect x="719.11" y="120.70" width="1.00" height="174.96" fill="#e6e6e6"/>
<rect x="721.11" y="120.70" width="1.00" height="174.96" fill="#f8f8f8"/>
<rect x="735.86" y="120.70" width="1.00" height="174.96" fill="#e6e6e6"/>
<rect x="737.86" y="120.70" width="1.00" height="174.96" fill="#f8f8f8"/>
<rect x="752.60" y="120.70" width="1.00" height="174.96" fill="#e6e6e6"/>
<rect x="754.60" y="120.70" width="1.00" height="174.96" fill="#f8f8f8"/>
<rect x="769.35" y="120.70" width="1.00" height="174.96" fill="#e6e6e6"/>
<rect x="771.35" y="120.70" width="1.00" height="174.96" fill="#f8f8f8"/>
<rect x="786.10" y="120.70" width="1.00" height="174.96" fill="#e6e6e6"/>
<rect x="788.10" y="120.70" width="1.00" height="174.96" fill="#f8f8f8"/>
<rect x="802.84" y="120.70" width="1.00" height="174.96" fill="#e6e6e6"/>
<rect x="804.84" y="120.70" width="1.00" height="174.96" fill="#f8f8f8"/>
<rect x="819.59" y="120.70" width="1.00" height="174.96" fill="#e6e6e6"/>
<rect x="821.59" y="120.70" width="1.00" height="174.96" fill="#f8f8f8"/>
<rect x="836.33" y="120.70" width="1.00" height="174.96" fill="#e6e6e6"/>
<rect x="838.33" y="120.70" width="1.00" height="174.96" fill="#f8f8f8"/>
<rect x="853.08" y="120.70" width="1.00" height="174.96" fill="#e6e6e6"/>
<rect x="855.08" y="120.70" width="1.00" height="174.96" fill="#f8f8f8"/>
<rect x="869.83" y="120.70" width="1.00" height="174.96" fill="#e6e6e6"/>
<rect x="871.83" y="120.70" width="1.00" height="174.96" fill="#f8f8f8"/>
<rect x="886.57" y="120.70" width="1.00" height="174.96" fill="#e6e6e6"/>
<rect x="888.57" y="120.70" width="1.00" height="174.96" fill="#f8f8f8"/>
<rect x="903.32" y="120.70" width="1.00" height="174.96" fill="#e6e6e6"/>
<rect x="905.32" y="120.70" width="1.00" height="174.96" fill="#f8f8f8"/>
<rect x="920.06" y="120.70" width="1.00" height="174.96" fill="#e6e6e6"/>
<rect x="922.06" y="120.70" width="1.00" height="174.96" fill="#f8f8f8"/>
<rect x="936.81" y="120.70" width="1.00" height="174.96" fill="#e6e6e6"/>
<rect x="938.81" y="120.70" width="1.00" height="174.96" fill="#f8f8f8"/>
<rect x="953.55" y="120.70" width="1.00" height="174.96" fill="#e6e6e6"/>
<rect x="955.55" y="120.70" width="1.00" height="174.96" fill="#f8f8f8"/>
<rect x="568.90" y="295.16" width="401.90" height="1.00" fill="#e3e3e3"/>
<text x="527.80" y="298.46" font-size="8.12" fill="#595959" textLength="33.76" lengthAdjust="spacingAndGlyphs">-4,000,000</text>
<rect x="568.90" y="275.72" width="401.90" height="1.00" fill="#e3e3e3"/>
<text x="527.80" y="279.02" font-size="8.12" fill="#595959" textLength="33.76" lengthAdjust="spacingAndGlyphs">-2,000,000</text>
<rect x="568.90" y="256.28" width="401.90" height="1.00" fill="#e3e3e3"/>
<text x="557.63" y="259.58" font-size="8.12" fill="#595959" textLength="3.93" lengthAdjust="spacingAndGlyphs">0</text>
<rect x="568.90" y="236.84" width="401.90" height="1.00" fill="#e3e3e3"/>
<text x="530.13" y="240.14" font-size="8.12" fill="#595959" textLength="31.41" lengthAdjust="spacingAndGlyphs">2,000,000</text>
<rect x="568.90" y="217.40" width="401.90" height="1.00" fill="#e3e3e3"/>
<text x="530.13" y="220.70" font-size="8.12" fill="#595959" textLength="31.41" lengthAdjust="spacingAndGlyphs">4,000,000</text>
<rect x="568.90" y="197.96" width="401.90" height="1.00" fill="#e3e3e3"/>
<text x="530.13" y="201.26" font-size="8.12" fill="#595959" textLength="31.41" lengthAdjust="spacingAndGlyphs">6,000,000</text>
<rect x="568.90" y="178.52" width="401.90" height="1.00" fill="#e3e3e3"/>
<text x="530.13" y="181.82" font-size="8.12" fill="#595959" textLength="31.41" lengthAdjust="spacingAndGlyphs">8,000,000</text>
<rect x="568.90" y="159.08" width="401.90" height="1.00" fill="#e3e3e3"/>
<text x="526.21" y="162.38" font-size="8.12" fill="#595959" textLength="35.34" lengthAdjust="spacingAndGlyphs">10,000,000</text>
<rect x="568.90" y="139.64" width="401.90" height="1.00" fill="#e3e3e3"/>
<text x="526.21" y="142.94" font-size="8.12" fill="#595959" textLength="35.34" lengthAdjust="spacingAndGlyphs">12,000,000</text>
<rect x="568.90" y="120.20" width="401.90" height="1.00" fill="#e3e3e3"/>
<text x="526.21" y="123.50" font-size="8.12" fill="#595959" textLength="35.34" lengthAdjust="spacingAndGlyphs">14,000,000</text>
<rect x="573.67" y="240.35" width="7.20" height="16.43" fill="#4472c4"/>
<rect x="573.67" y="228.98" width="7.20" height="11.37" fill="#a5a5a5"/>
<rect x="573.67" y="256.78" width="7.20" height="4.86" fill="#ed7d31"/>
<rect x="590.42" y="215.96" width="7.20" height="40.82" fill="#4472c4"/>
<rect x="590.42" y="185.34" width="7.20" height="30.62" fill="#a5a5a5"/>
<rect x="590.42" y="256.78" width="7.20" height="9.72" fill="#ed7d31"/>
<rect x="607.16" y="240.35" width="7.20" height="16.43" fill="#4472c4"/>
<rect x="607.16" y="229.66" width="7.20" height="10.69" fill="#a5a5a5"/>
<rect x="607.16" y="256.78" width="7.20" height="4.86" fill="#ed7d31"/>
<rect x="623.91" y="224.70" width="7.20" height="32.08" fill="#4472c4"/>
<rect x="623.91" y="201.38" width="7.20" height="23.33" fill="#a5a5a5"/>
<rect x="623.91" y="256.78" width="7.20" height="7.78" fill="#ed7d31"/>
<rect x="640.66" y="188.74" width="7.20" height="68.04" fill="#4472c4"/>
<rect x="640.66" y="135.28" width="7.20" height="53.46" fill="#a5a5a5"/>
<rect x="640.66" y="256.78" width="7.20" height="14.58" fill="#ed7d31"/>
<rect x="657.40" y="231.51" width="7.20" height="25.27" fill="#4472c4"/>
<rect x="657.40" y="212.07" width="7.20" height="19.44" fill="#a5a5a5"/>
<rect x="657.40" y="256.78" width="7.20" height="6.80" fill="#ed7d31"/>
<rect x="674.15" y="239.77" width="7.20" height="17.01" fill="#4472c4"/>
<rect x="674.15" y="227.13" width="7.20" height="12.64" fill="#a5a5a5"/>
<rect x="674.15" y="256.78" width="7.20" height="4.86" fill="#ed7d31"/>
<rect x="690.89" y="245.80" width="7.20" height="10.98" fill="#4472c4"/>
<rect x="690.89" y="237.24" width="7.20" height="8.55" fill="#a5a5a5"/>
<rect x="690.89" y="256.78" width="7.20" height="3.21" fill="#ed7d31"/>
<rect x="707.64" y="241.23" width="7.20" height="15.55" fill="#4472c4"/>
<rect x="707.64" y="229.86" width="7.20" height="11.37" fill="#a5a5a5"/>
<rect x="707.64" y="256.78" width="7.20" height="4.86" fill="#ed7d31"/>
<rect x="724.39" y="255.81" width="7.20" height="0.97" fill="#4472c4"/>
<rect x="724.39" y="255.32" width="7.20" height="0.70" fill="#a5a5a5"/>
<rect x="741.13" y="252.89" width="7.20" height="3.89" fill="#4472c4"/>
<rect x="741.13" y="250.75" width="7.20" height="2.14" fill="#a5a5a5"/>
<rect x="741.13" y="256.78" width="7.20" height="0.97" fill="#ed7d31"/>
<rect x="757.88" y="248.32" width="7.20" height="8.46" fill="#4472c4"/>
<rect x="757.88" y="244.14" width="7.20" height="4.18" fill="#a5a5a5"/>
<rect x="757.88" y="256.78" width="7.20" height="1.94" fill="#ed7d31"/>
<rect x="774.62" y="212.26" width="7.20" height="44.52" fill="#4472c4"/>
<rect x="774.62" y="176.69" width="7.20" height="35.58" fill="#a5a5a5"/>
<rect x="774.62" y="256.78" width="7.20" height="10.30" fill="#ed7d31"/>
<rect x="791.37" y="222.95" width="7.20" height="33.83" fill="#4472c4"/>
<rect x="791.37" y="195.93" width="7.20" height="27.02" fill="#a5a5a5"/>
<rect x="791.37" y="256.78" width="7.20" height="8.46" fill="#ed7d31"/>
<rect x="808.11" y="249.68" width="7.20" height="7.10" fill="#4472c4"/>
<rect x="808.11" y="245.02" width="7.20" height="4.67" fill="#a5a5a5"/>
<rect x="808.11" y="256.78" width="7.20" height="2.92" fill="#ed7d31"/>
<rect x="824.86" y="248.52" width="7.20" height="8.26" fill="#4472c4"/>
<rect x="824.86" y="242.10" width="7.20" height="6.42" fill="#a5a5a5"/>
<rect x="824.86" y="256.78" width="7.20" height="2.92" fill="#ed7d31"/>
<rect x="841.61" y="212.26" width="7.20" height="44.52" fill="#4472c4"/>
<rect x="841.61" y="178.44" width="7.20" height="33.83" fill="#a5a5a5"/>
<rect x="841.61" y="256.78" width="7.20" height="9.72" fill="#ed7d31"/>
<rect x="858.35" y="231.51" width="7.20" height="25.27" fill="#4472c4"/>
<rect x="858.35" y="212.07" width="7.20" height="19.44" fill="#a5a5a5"/>
<rect x="858.35" y="256.78" width="7.20" height="6.71" fill="#ed7d31"/>
<rect x="875.10" y="252.89" width="7.20" height="3.89" fill="#4472c4"/>
<rect x="875.10" y="250.95" width="7.20" height="1.94" fill="#a5a5a5"/>
<rect x="875.10" y="256.78" width="7.20" height="0.78" fill="#ed7d31"/>
<rect x="891.84" y="254.45" width="7.20" height="2.33" fill="#4472c4"/>
<rect x="891.84" y="253.28" width="7.20" height="1.17" fill="#a5a5a5"/>
<rect x="891.84" y="256.78" width="7.20" height="0.70" fill="#ed7d31"/>
<rect x="908.59" y="256.39" width="7.20" height="0.70" fill="#4472c4"/>
<rect x="908.59" y="256.20" width="7.20" height="0.70" fill="#a5a5a5"/>
<rect x="925.34" y="256.29" width="7.20" height="0.70" fill="#4472c4"/>
<rect x="925.34" y="256.10" width="7.20" height="0.70" fill="#a5a5a5"/>
<rect x="942.08" y="255.61" width="7.20" height="1.17" fill="#4472c4"/>
<rect x="942.08" y="255.22" width="7.20" height="0.70" fill="#a5a5a5"/>
<rect x="958.83" y="255.13" width="7.20" height="1.65" fill="#4472c4"/>
<rect x="958.83" y="254.54" width="7.20" height="0.70" fill="#a5a5a5"/>
<text x="571.79" y="310.10" font-size="7.54" fill="#595959" textLength="11.30" lengthAdjust="spacingAndGlyphs">Jan</text>
<text x="587.85" y="310.10" font-size="7.54" fill="#595959" textLength="12.08" lengthAdjust="spacingAndGlyphs">Feb</text>
<text x="604.49" y="310.10" font-size="7.54" fill="#595959" textLength="12.07" lengthAdjust="spacingAndGlyphs">Mar</text>
<text x="622.10" y="310.10" font-size="7.54" fill="#595959" textLength="10.91" lengthAdjust="spacingAndGlyphs">Apr</text>
<text x="637.35" y="310.10" font-size="7.54" fill="#595959" textLength="13.24" lengthAdjust="spacingAndGlyphs">May</text>
<text x="655.52" y="310.10" font-size="7.54" fill="#595959" textLength="11.30" lengthAdjust="spacingAndGlyphs">Jun</text>
<text x="673.44" y="310.10" font-size="7.54" fill="#595959" textLength="8.96" lengthAdjust="spacingAndGlyphs">Jul</text>
<text x="688.47" y="310.10" font-size="7.54" fill="#595959" textLength="12.47" lengthAdjust="spacingAndGlyphs">Aug</text>
<text x="704.98" y="310.10" font-size="7.54" fill="#595959" textLength="12.47" lengthAdjust="spacingAndGlyphs">Sep</text>
<text x="722.38" y="310.10" font-size="7.54" fill="#595959" textLength="10.90" lengthAdjust="spacingAndGlyphs">Oct</text>
<text x="738.21" y="310.10" font-size="7.54" fill="#595959" textLength="12.46" lengthAdjust="spacingAndGlyphs">Nov</text>
<text x="755.05" y="310.10" font-size="7.54" fill="#595959" textLength="12.46" lengthAdjust="spacingAndGlyphs">Dec</text>
<text x="772.74" y="310.10" font-size="7.54" fill="#595959" textLength="11.30" lengthAdjust="spacingAndGlyphs">Jan</text>
<text x="788.80" y="310.10" font-size="7.54" fill="#595959" textLength="12.08" lengthAdjust="spacingAndGlyphs">Feb</text>
<text x="805.44" y="310.10" font-size="7.54" fill="#595959" textLength="12.07" lengthAdjust="spacingAndGlyphs">Mar</text>
<text x="823.05" y="310.10" font-size="7.54" fill="#595959" textLength="10.91" lengthAdjust="spacingAndGlyphs">Apr</text>
<text x="838.30" y="310.10" font-size="7.54" fill="#595959" textLength="13.24" lengthAdjust="spacingAndGlyphs">May</text>
<text x="856.47" y="310.10" font-size="7.54" fill="#595959" textLength="11.30" lengthAdjust="spacingAndGlyphs">Jun</text>
<text x="874.39" y="310.10" font-size="7.54" fill="#595959" textLength="8.96" lengthAdjust="spacingAndGlyphs">Jul</text>
<text x="889.42" y="310.10" font-size="7.54" fill="#595959" textLength="12.47" lengthAdjust="spacingAndGlyphs">Aug</text>
<text x="905.93" y="310.10" font-size="7.54" fill="#595959" textLength="12.47" lengthAdjust="spacingAndGlyphs">Sep</text>
<text x="923.33" y="310.10" font-size="7.54" fill="#595959" textLength="10.90" lengthAdjust="spacingAndGlyphs">Oct</text>
<text x="939.16" y="310.10" font-size="7.54" fill="#595959" textLength="12.46" lengthAdjust="spacingAndGlyphs">Nov</text>
<text x="956.00" y="310.10" font-size="7.54" fill="#595959" textLength="12.46" lengthAdjust="spacingAndGlyphs">Dec</text>
<text x="422.06" y="338.60" font-size="13.62" fill="#595959" textLength="158.45" lengthAdjust="spacingAndGlyphs">Key KPI's 5 Years 2025 - 2029</text>
<rect x="333.60" y="353.70" width="4.50" height="4.50" fill="#4472c4"/>
<text x="339.04" y="358.40" font-size="7.10" fill="#595959" textLength="27.86" lengthAdjust="spacingAndGlyphs">Revenue</text>
<rect x="379.60" y="353.70" width="4.50" height="4.50" fill="#ed7d31"/>
<text x="385.87" y="358.40" font-size="7.10" fill="#595959" textLength="35.40" lengthAdjust="spacingAndGlyphs">Total COGS</text>
<rect x="434.40" y="353.70" width="4.50" height="4.50" fill="#a5a5a5"/>
<text x="439.86" y="358.40" font-size="7.10" fill="#595959" textLength="74.38" lengthAdjust="spacingAndGlyphs">Total Variable Expenses</text>
<rect x="528.00" y="353.70" width="4.50" height="4.50" fill="#ffc000"/>
<text x="533.86" y="358.40" font-size="7.10" fill="#595959" textLength="96.40" lengthAdjust="spacingAndGlyphs">Total Admin Salary and Wages</text>
<rect x="642.40" y="353.70" width="4.50" height="4.50" fill="#5b9bd5"/>
<text x="648.49" y="358.40" font-size="7.10" fill="#595959" textLength="23.12" lengthAdjust="spacingAndGlyphs">EBITDA</text>
<rect x="69.50" y="372.70" width="901.90" height="185.94" fill="#f2f2f2"/>
<rect x="69.50" y="547.81" width="901.90" height="1.00" fill="#f7f7f7"/>
<rect x="69.50" y="527.15" width="901.90" height="1.00" fill="#f7f7f7"/>
<rect x="69.50" y="506.49" width="901.90" height="1.00" fill="#f7f7f7"/>
<rect x="69.50" y="485.83" width="901.90" height="1.00" fill="#f7f7f7"/>
<rect x="69.50" y="465.17" width="901.90" height="1.00" fill="#f7f7f7"/>
<rect x="69.50" y="444.51" width="901.90" height="1.00" fill="#f7f7f7"/>
<rect x="69.50" y="423.85" width="901.90" height="1.00" fill="#f7f7f7"/>
<rect x="69.50" y="403.19" width="901.90" height="1.00" fill="#f7f7f7"/>
<rect x="69.50" y="382.53" width="901.90" height="1.00" fill="#f7f7f7"/>
<rect x="84.03" y="372.70" width="1.00" height="185.94" fill="#e6e6e6"/>
<rect x="86.03" y="372.70" width="1.00" height="185.94" fill="#f8f8f8"/>
<rect x="99.06" y="372.70" width="1.00" height="185.94" fill="#e6e6e6"/>
<rect x="101.06" y="372.70" width="1.00" height="185.94" fill="#f8f8f8"/>
<rect x="114.09" y="372.70" width="1.00" height="185.94" fill="#e6e6e6"/>
<rect x="116.09" y="372.70" width="1.00" height="185.94" fill="#f8f8f8"/>
<rect x="129.13" y="372.70" width="1.00" height="185.94" fill="#e6e6e6"/>
<rect x="131.13" y="372.70" width="1.00" height="185.94" fill="#f8f8f8"/>
<rect x="144.16" y="372.70" width="1.00" height="185.94" fill="#e6e6e6"/>
<rect x="146.16" y="372.70" width="1.00" height="185.94" fill="#f8f8f8"/>
<rect x="159.19" y="372.70" width="1.00" height="185.94" fill="#e6e6e6"/>
<rect x="161.19" y="372.70" width="1.00" height="185.94" fill="#f8f8f8"/>
<rect x="174.22" y="372.70" width="1.00" height="185.94" fill="#e6e6e6"/>
<rect x="176.22" y="372.70" width="1.00" height="185.94" fill="#f8f8f8"/>
<rect x="189.25" y="372.70" width="1.00" height="185.94" fill="#e6e6e6"/>
<rect x="191.25" y="372.70" width="1.00" height="185.94" fill="#f8f8f8"/>
<rect x="204.28" y="372.70" width="1.00" height="185.94" fill="#e6e6e6"/>
<rect x="206.28" y="372.70" width="1.00" height="185.94" fill="#f8f8f8"/>
<rect x="219.32" y="372.70" width="1.00" height="185.94" fill="#e6e6e6"/>
<rect x="221.32" y="372.70" width="1.00" height="185.94" fill="#f8f8f8"/>
<rect x="234.35" y="372.70" width="1.00" height="185.94" fill="#e6e6e6"/>
<rect x="236.35" y="372.70" width="1.00" height="185.94" fill="#f8f8f8"/>
<rect x="249.38" y="372.70" width="1.00" height="185.94" fill="#e6e6e6"/>
<rect x="251.38" y="372.70" width="1.00" height="185.94" fill="#f8f8f8"/>
<rect x="264.41" y="372.70" width="1.00" height="185.94" fill="#e6e6e6"/>
<rect x="266.41" y="372.70" width="1.00" height="185.94" fill="#f8f8f8"/>
<rect x="279.44" y="372.70" width="1.00" height="185.94" fill="#e6e6e6"/>
<rect x="281.44" y="372.70" width="1.00" height="185.94" fill="#f8f8f8"/>
<rect x="294.48" y="372.70" width="1.00" height="185.94" fill="#e6e6e6"/>
<rect x="296.48" y="372.70" width="1.00" height="185.94" fill="#f8f8f8"/>
<rect x="309.51" y="372.70" width="1.00" height="185.94" fill="#e6e6e6"/>
<rect x="311.51" y="372.70" width="1.00" height="185.94" fill="#f8f8f8"/>
<rect x="324.54" y="372.70" width="1.00" height="185.94" fill="#e6e6e6"/>
<rect x="326.54" y="372.70" width="1.00" height="185.94" fill="#f8f8f8"/>
<rect x="339.57" y="372.70" width="1.00" height="185.94" fill="#e6e6e6"/>
<rect x="341.57" y="372.70" width="1.00" height="185.94" fill="#f8f8f8"/>
<rect x="354.60" y="372.70" width="1.00" height="185.94" fill="#e6e6e6"/>
<rect x="356.60" y="372.70" width="1.00" height="185.94" fill="#f8f8f8"/>
<rect x="369.63" y="372.70" width="1.00" height="185.94" fill="#e6e6e6"/>
<rect x="371.63" y="372.70" width="1.00" height="185.94" fill="#f8f8f8"/>
<rect x="384.66" y="372.70" width="1.00" height="185.94" fill="#e6e6e6"/>
<rect x="386.66" y="372.70" width="1.00" height="185.94" fill="#f8f8f8"/>
<rect x="399.70" y="372.70" width="1.00" height="185.94" fill="#e6e6e6"/>
<rect x="401.70" y="372.70" width="1.00" height="185.94" fill="#f8f8f8"/>
<rect x="414.73" y="372.70" width="1.00" height="185.94" fill="#e6e6e6"/>
<rect x="416.73" y="372.70" width="1.00" height="185.94" fill="#f8f8f8"/>
<rect x="429.76" y="372.70" width="1.00" height="185.94" fill="#e6e6e6"/>
<rect x="431.76" y="372.70" width="1.00" height="185.94" fill="#f8f8f8"/>
<rect x="444.79" y="372.70" width="1.00" height="185.94" fill="#e6e6e6"/>
<rect x="446.79" y="372.70" width="1.00" height="185.94" fill="#f8f8f8"/>
<rect x="459.82" y="372.70" width="1.00" height="185.94" fill="#e6e6e6"/>
<rect x="461.82" y="372.70" width="1.00" height="185.94" fill="#f8f8f8"/>
<rect x="474.86" y="372.70" width="1.00" height="185.94" fill="#e6e6e6"/>
<rect x="476.86" y="372.70" width="1.00" height="185.94" fill="#f8f8f8"/>
<rect x="489.89" y="372.70" width="1.00" height="185.94" fill="#e6e6e6"/>
<rect x="491.89" y="372.70" width="1.00" height="185.94" fill="#f8f8f8"/>
<rect x="504.92" y="372.70" width="1.00" height="185.94" fill="#e6e6e6"/>
<rect x="506.92" y="372.70" width="1.00" height="185.94" fill="#f8f8f8"/>
<rect x="519.95" y="372.70" width="1.00" height="185.94" fill="#e6e6e6"/>
<rect x="521.95" y="372.70" width="1.00" height="185.94" fill="#f8f8f8"/>
<rect x="534.98" y="372.70" width="1.00" height="185.94" fill="#e6e6e6"/>
<rect x="536.98" y="372.70" width="1.00" height="185.94" fill="#f8f8f8"/>
<rect x="550.01" y="372.70" width="1.00" height="185.94" fill="#e6e6e6"/>
<rect x="552.01" y="372.70" width="1.00" height="185.94" fill="#f8f8f8"/>
<rect x="565.04" y="372.70" width="1.00" height="185.94" fill="#e6e6e6"/>
<rect x="567.04" y="372.70" width="1.00" height="185.94" fill="#f8f8f8"/>
<rect x="580.08" y="372.70" width="1.00" height="185.94" fill="#e6e6e6"/>
<rect x="582.08" y="372.70" width="1.00" height="185.94" fill="#f8f8f8"/>
<rect x="595.11" y="372.70" width="1.00" height="185.94" fill="#e6e6e6"/>
<rect x="597.11" y="372.70" width="1.00" height="185.94" fill="#f8f8f8"/>
<rect x="610.14" y="372.70" width="1.00" height="185.94" fill="#e6e6e6"/>
<rect x="612.14" y="372.70" width="1.00" height="185.94" fill="#f8f8f8"/>
<rect x="625.17" y="372.70" width="1.00" height="185.94" fill="#e6e6e6"/>
<rect x="627.17" y="372.70" width="1.00" height="185.94" fill="#f8f8f8"/>
<rect x="640.20" y="372.70" width="1.00" height="185.94" fill="#e6e6e6"/>
<rect x="642.20" y="372.70" width="1.00" height="185.94" fill="#f8f8f8"/>
<rect x="655.24" y="372.70" width="1.00" height="185.94" fill="#e6e6e6"/>
<rect x="657.24" y="372.70" width="1.00" height="185.94" fill="#f8f8f8"/>
<rect x="670.27" y="372.70" width="1.00" height="185.94" fill="#e6e6e6"/>
<rect x="672.27" y="372.70" width="1.00" height="185.94" fill="#f8f8f8"/>
<rect x="685.30" y="372.70" width="1.00" height="185.94" fill="#e6e6e6"/>
<rect x="687.30" y="372.70" width="1.00" height="185.94" fill="#f8f8f8"/>
<rect x="700.33" y="372.70" width="1.00" height="185.94" fill="#e6e6e6"/>
<rect x="702.33" y="372.70" width="1.00" height="185.94" fill="#f8f8f8"/>
<rect x="715.36" y="372.70" width="1.00" height="185.94" fill="#e6e6e6"/>
<rect x="717.36" y="372.70" width="1.00" height="185.94" fill="#f8f8f8"/>
<rect x="730.39" y="372.70" width="1.00" height="185.94" fill="#e6e6e6"/>
<rect x="732.39" y="372.70" width="1.00" height="185.94" fill="#f8f8f8"/>
<rect x="745.42" y="372.70" width="1.00" height="185.94" fill="#e6e6e6"/>
<rect x="747.42" y="372.70" width="1.00" height="185.94" fill="#f8f8f8"/>
<rect x="760.46" y="372.70" width="1.00" height="185.94" fill="#e6e6e6"/>
<rect x="762.46" y="372.70" width="1.00" height="185.94" fill="#f8f8f8"/>
<rect x="775.49" y="372.70" width="1.00" height="185.94" fill="#e6e6e6"/>
<rect x="777.49" y="372.70" width="1.00" height="185.94" fill="#f8f8f8"/>
<rect x="790.52" y="372.70" width="1.00" height="185.94" fill="#e6e6e6"/>
<rect x="792.52" y="372.70" width="1.00" height="185.94" fill="#f8f8f8"/>
<rect x="805.55" y="372.70" width="1.00" height="185.94" fill="#e6e6e6"/>
<rect x="807.55" y="372.70" width="1.00" height="185.94" fill="#f8f8f8"/>
<rect x="820.58" y="372.70" width="1.00" height="185.94" fill="#e6e6e6"/>
<rect x="822.58" y="372.70" width="1.00" height="185.94" fill="#f8f8f8"/>
<rect x="835.62" y="372.70" width="1.00" height="185.94" fill="#e6e6e6"/>
<rect x="837.62" y="372.70" width="1.00" height="185.94" fill="#f8f8f8"/>
<rect x="850.65" y="372.70" width="1.00" height="185.94" fill="#e6e6e6"/>
<rect x="852.65" y="372.70" width="1.00" height="185.94" fill="#f8f8f8"/>
<rect x="865.68" y="372.70" width="1.00" height="185.94" fill="#e6e6e6"/>
<rect x="867.68" y="372.70" width="1.00" height="185.94" fill="#f8f8f8"/>
<rect x="880.71" y="372.70" width="1.00" height="185.94" fill="#e6e6e6"/>
<rect x="882.71" y="372.70" width="1.00" height="185.94" fill="#f8f8f8"/>
<rect x="895.74" y="372.70" width="1.00" height="185.94" fill="#e6e6e6"/>
<rect x="897.74" y="372.70" width="1.00" height="185.94" fill="#f8f8f8"/>
<rect x="910.77" y="372.70" width="1.00" height="185.94" fill="#e6e6e6"/>
<rect x="912.77" y="372.70" width="1.00" height="185.94" fill="#f8f8f8"/>
<rect x="925.80" y="372.70" width="1.00" height="185.94" fill="#e6e6e6"/>
<rect x="927.80" y="372.70" width="1.00" height="185.94" fill="#f8f8f8"/>
<rect x="940.84" y="372.70" width="1.00" height="185.94" fill="#e6e6e6"/>
<rect x="942.84" y="372.70" width="1.00" height="185.94" fill="#f8f8f8"/>
<rect x="955.87" y="372.70" width="1.00" height="185.94" fill="#e6e6e6"/>
<rect x="957.87" y="372.70" width="1.00" height="185.94" fill="#f8f8f8"/>
<rect x="69.50" y="558.14" width="901.90" height="1.00" fill="#e3e3e3"/>
<text x="28.50" y="561.44" font-size="8.12" fill="#595959" textLength="33.76" lengthAdjust="spacingAndGlyphs">-2,000,000</text>
<rect x="69.50" y="537.48" width="901.90" height="1.00" fill="#e3e3e3"/>
<text x="58.33" y="540.78" font-size="8.12" fill="#595959" textLength="3.93" lengthAdjust="spacingAndGlyphs">0</text>
<rect x="69.50" y="516.82" width="901.90" height="1.00" fill="#e3e3e3"/>
<text x="30.83" y="520.12" font-size="8.12" fill="#595959" textLength="31.41" lengthAdjust="spacingAndGlyphs">2,000,000</text>
<rect x="69.50" y="496.16" width="901.90" height="1.00" fill="#e3e3e3"/>
<text x="30.83" y="499.46" font-size="8.12" fill="#595959" textLength="31.41" lengthAdjust="spacingAndGlyphs">4,000,000</text>
<rect x="69.50" y="475.50" width="901.90" height="1.00" fill="#e3e3e3"/>
<text x="30.83" y="478.80" font-size="8.12" fill="#595959" textLength="31.41" lengthAdjust="spacingAndGlyphs">6,000,000</text>
<rect x="69.50" y="454.84" width="901.90" height="1.00" fill="#e3e3e3"/>
<text x="30.83" y="458.14" font-size="8.12" fill="#595959" textLength="31.41" lengthAdjust="spacingAndGlyphs">8,000,000</text>
<rect x="69.50" y="434.18" width="901.90" height="1.00" fill="#e3e3e3"/>
<text x="26.91" y="437.48" font-size="8.12" fill="#595959" textLength="35.34" lengthAdjust="spacingAndGlyphs">10,000,000</text>
<rect x="69.50" y="413.52" width="901.90" height="1.00" fill="#e3e3e3"/>
<text x="26.91" y="416.82" font-size="8.12" fill="#595959" textLength="35.34" lengthAdjust="spacingAndGlyphs">12,000,000</text>
<rect x="69.50" y="392.86" width="901.90" height="1.00" fill="#e3e3e3"/>
<text x="26.91" y="396.16" font-size="8.12" fill="#595959" textLength="35.34" lengthAdjust="spacingAndGlyphs">14,000,000</text>
<rect x="69.50" y="372.20" width="901.90" height="1.00" fill="#e3e3e3"/>
<text x="26.91" y="375.50" font-size="8.12" fill="#595959" textLength="35.34" lengthAdjust="spacingAndGlyphs">16,000,000</text>
<rect x="74.22" y="520.11" width="5.60" height="17.87" fill="#4472c4"/>
<rect x="74.22" y="503.17" width="5.60" height="16.94" fill="#5b9bd5"/>
<rect x="89.25" y="494.59" width="5.60" height="43.39" fill="#4472c4"/>
<rect x="89.25" y="452.24" width="5.60" height="42.35" fill="#5b9bd5"/>
<rect x="104.28" y="520.42" width="5.60" height="17.56" fill="#4472c4"/>
<rect x="104.28" y="504.20" width="5.60" height="16.22" fill="#5b9bd5"/>
<rect x="119.31" y="503.89" width="5.60" height="34.09" fill="#4472c4"/>
<rect x="119.31" y="470.84" width="5.60" height="33.06" fill="#5b9bd5"/>
<rect x="134.34" y="464.95" width="5.60" height="73.03" fill="#4472c4"/>
<rect x="134.34" y="393.36" width="5.60" height="71.59" fill="#5b9bd5"/>
<rect x="149.37" y="510.09" width="5.60" height="27.89" fill="#4472c4"/>
<rect x="149.37" y="483.64" width="5.60" height="26.44" fill="#5b9bd5"/>
<rect x="164.41" y="519.39" width="5.60" height="18.59" fill="#4472c4"/>
<rect x="164.41" y="501.83" width="5.60" height="17.56" fill="#5b9bd5"/>
<rect x="179.44" y="526.00" width="5.60" height="11.98" fill="#4472c4"/>
<rect x="179.44" y="514.22" width="5.60" height="11.78" fill="#5b9bd5"/>
<rect x="194.47" y="521.45" width="5.60" height="16.53" fill="#4472c4"/>
<rect x="194.47" y="504.92" width="5.60" height="16.53" fill="#5b9bd5"/>
<rect x="209.50" y="536.74" width="5.60" height="1.24" fill="#4472c4"/>
<rect x="209.50" y="535.40" width="5.60" height="1.34" fill="#5b9bd5"/>
<rect x="224.53" y="533.85" width="5.60" height="4.13" fill="#4472c4"/>
<rect x="224.53" y="529.72" width="5.60" height="4.13" fill="#5b9bd5"/>
<rect x="239.56" y="530.44" width="5.60" height="7.54" fill="#4472c4"/>
<rect x="239.56" y="522.90" width="5.60" height="7.54" fill="#5b9bd5"/>
<rect x="254.60" y="490.46" width="5.60" height="47.52" fill="#4472c4"/>
<rect x="254.60" y="442.94" width="5.60" height="47.52" fill="#5b9bd5"/>
<rect x="269.63" y="501.83" width="5.60" height="36.15" fill="#4472c4"/>
<rect x="269.63" y="464.95" width="5.60" height="36.88" fill="#5b9bd5"/>
<rect x="284.66" y="530.23" width="5.60" height="7.75" fill="#4472c4"/>
<rect x="284.66" y="522.49" width="5.60" height="7.75" fill="#5b9bd5"/>
<rect x="299.69" y="528.68" width="5.60" height="9.30" fill="#4472c4"/>
<rect x="299.69" y="519.39" width="5.60" height="9.30" fill="#5b9bd5"/>
<rect x="314.72" y="491.50" width="5.60" height="46.49" fill="#4472c4"/>
<rect x="314.72" y="444.29" width="5.60" height="47.21" fill="#5b9bd5"/>
<rect x="329.75" y="510.09" width="5.60" height="27.89" fill="#4472c4"/>
<rect x="329.75" y="483.64" width="5.60" height="26.44" fill="#5b9bd5"/>
<rect x="344.79" y="533.64" width="5.60" height="4.34" fill="#4472c4"/>
<rect x="344.79" y="529.20" width="5.60" height="4.44" fill="#5b9bd5"/>
<rect x="359.82" y="535.50" width="5.60" height="2.48" fill="#4472c4"/>
<rect x="359.82" y="533.02" width="5.60" height="2.48" fill="#5b9bd5"/>
<rect x="374.85" y="537.05" width="5.60" height="0.93" fill="#4472c4"/>
<rect x="374.85" y="536.12" width="5.60" height="0.93" fill="#5b9bd5"/>
<rect x="389.88" y="537.15" width="5.60" height="0.83" fill="#4472c4"/>
<rect x="389.88" y="536.43" width="5.60" height="0.72" fill="#5b9bd5"/>
<rect x="404.91" y="536.74" width="5.60" height="1.24" fill="#4472c4"/>
<rect x="404.91" y="535.40" width="5.60" height="1.34" fill="#5b9bd5"/>
<rect x="419.94" y="536.33" width="5.60" height="1.65" fill="#4472c4"/>
<rect x="419.94" y="534.57" width="5.60" height="1.76" fill="#5b9bd5"/>
<rect x="434.98" y="501.10" width="5.60" height="36.88" fill="#4472c4"/>
<rect x="434.98" y="461.95" width="5.60" height="39.15" fill="#5b9bd5"/>
<rect x="450.01" y="506.16" width="5.60" height="31.82" fill="#4472c4"/>
<rect x="450.01" y="472.59" width="5.60" height="33.57" fill="#5b9bd5"/>
<rect x="465.04" y="530.75" width="5.60" height="7.23" fill="#4472c4"/>
<rect x="465.04" y="522.69" width="5.60" height="8.06" fill="#5b9bd5"/>
<rect x="480.07" y="529.10" width="5.60" height="8.88" fill="#4472c4"/>
<rect x="480.07" y="519.70" width="5.60" height="9.40" fill="#5b9bd5"/>
<rect x="495.10" y="481.17" width="5.60" height="56.81" fill="#4472c4"/>
<rect x="495.10" y="423.73" width="5.60" height="57.43" fill="#5b9bd5"/>
<rect x="510.13" y="520.11" width="5.60" height="17.87" fill="#4472c4"/>
<rect x="510.13" y="502.24" width="5.60" height="17.87" fill="#5b9bd5"/>
<rect x="525.17" y="522.49" width="5.60" height="15.50" fill="#4472c4"/>
<rect x="525.17" y="506.99" width="5.60" height="15.50" fill="#5b9bd5"/>
<rect x="540.20" y="535.91" width="5.60" height="2.07" fill="#4472c4"/>
<rect x="540.20" y="533.85" width="5.60" height="2.07" fill="#5b9bd5"/>
<rect x="555.23" y="527.86" width="5.60" height="10.12" fill="#4472c4"/>
<rect x="555.23" y="518.04" width="5.60" height="9.81" fill="#5b9bd5"/>
<rect x="570.26" y="535.29" width="5.60" height="2.69" fill="#4472c4"/>
<rect x="570.26" y="532.51" width="5.60" height="2.79" fill="#5b9bd5"/>
<rect x="585.29" y="537.83" width="5.60" height="0.70" fill="#4472c4"/>
<rect x="585.29" y="537.67" width="5.60" height="0.70" fill="#5b9bd5"/>
<rect x="600.32" y="533.95" width="5.60" height="4.03" fill="#4472c4"/>
<rect x="600.32" y="529.92" width="5.60" height="4.03" fill="#5b9bd5"/>
<rect x="615.36" y="486.33" width="5.60" height="51.65" fill="#4472c4"/>
<rect x="615.36" y="435.20" width="5.60" height="51.13" fill="#5b9bd5"/>
<rect x="630.39" y="505.44" width="5.60" height="32.54" fill="#4472c4"/>
<rect x="630.39" y="472.59" width="5.60" height="32.85" fill="#5b9bd5"/>
<rect x="645.42" y="530.75" width="5.60" height="7.23" fill="#4472c4"/>
<rect x="645.42" y="522.69" width="5.60" height="8.06" fill="#5b9bd5"/>
<rect x="660.45" y="529.10" width="5.60" height="8.88" fill="#4472c4"/>
<rect x="660.45" y="519.70" width="5.60" height="9.40" fill="#5b9bd5"/>
<rect x="675.48" y="481.17" width="5.60" height="56.81" fill="#4472c4"/>
<rect x="675.48" y="423.73" width="5.60" height="57.43" fill="#5b9bd5"/>
<rect x="690.51" y="520.42" width="5.60" height="17.56" fill="#4472c4"/>
<rect x="690.51" y="502.86" width="5.60" height="17.56" fill="#5b9bd5"/>
<rect x="705.55" y="522.49" width="5.60" height="15.50" fill="#4472c4"/>
<rect x="705.55" y="506.99" width="5.60" height="15.50" fill="#5b9bd5"/>
<rect x="720.58" y="536.43" width="5.60" height="1.55" fill="#4472c4"/>
<rect x="720.58" y="534.88" width="5.60" height="1.55" fill="#5b9bd5"/>
<rect x="735.61" y="527.86" width="5.60" height="10.12" fill="#4472c4"/>
<rect x="735.61" y="518.04" width="5.60" height="9.81" fill="#5b9bd5"/>
<rect x="750.64" y="535.40" width="5.60" height="2.58" fill="#4472c4"/>
<rect x="750.64" y="532.82" width="5.60" height="2.58" fill="#5b9bd5"/>
<rect x="765.67" y="537.83" width="5.60" height="0.70" fill="#4472c4"/>
<rect x="765.67" y="537.67" width="5.60" height="0.70" fill="#5b9bd5"/>
<rect x="780.70" y="534.36" width="5.60" height="3.62" fill="#4472c4"/>
<rect x="780.70" y="530.75" width="5.60" height="3.62" fill="#5b9bd5"/>
<rect x="795.74" y="488.91" width="5.60" height="49.07" fill="#4472c4"/>
<rect x="795.74" y="439.85" width="5.60" height="49.07" fill="#5b9bd5"/>
<rect x="810.77" y="505.44" width="5.60" height="32.54" fill="#4472c4"/>
<rect x="810.77" y="472.59" width="5.60" height="32.85" fill="#5b9bd5"/>
<rect x="825.80" y="530.75" width="5.60" height="7.23" fill="#4472c4"/>
<rect x="825.80" y="522.69" width="5.60" height="8.06" fill="#5b9bd5"/>
<rect x="840.83" y="529.10" width="5.60" height="8.88" fill="#4472c4"/>
<rect x="840.83" y="519.70" width="5.60" height="9.40" fill="#5b9bd5"/>
<rect x="855.86" y="481.17" width="5.60" height="56.81" fill="#4472c4"/>
<rect x="855.86" y="423.73" width="5.60" height="57.43" fill="#5b9bd5"/>
<rect x="870.89" y="520.42" width="5.60" height="17.56" fill="#4472c4"/>
<rect x="870.89" y="502.86" width="5.60" height="17.56" fill="#5b9bd5"/>
<rect x="885.93" y="522.49" width="5.60" height="15.50" fill="#4472c4"/>
<rect x="885.93" y="506.99" width="5.60" height="15.50" fill="#5b9bd5"/>
<rect x="900.96" y="536.43" width="5.60" height="1.55" fill="#4472c4"/>
<rect x="900.96" y="534.88" width="5.60" height="1.55" fill="#5b9bd5"/>
<rect x="915.99" y="527.86" width="5.60" height="10.12" fill="#4472c4"/>
<rect x="915.99" y="518.04" width="5.60" height="9.81" fill="#5b9bd5"/>
<rect x="931.02" y="535.40" width="5.60" height="2.58" fill="#4472c4"/>
<rect x="931.02" y="532.82" width="5.60" height="2.58" fill="#5b9bd5"/>
<rect x="946.05" y="537.83" width="5.60" height="0.70" fill="#4472c4"/>
<rect x="946.05" y="537.67" width="5.60" height="0.70" fill="#5b9bd5"/>
<rect x="961.08" y="534.36" width="5.60" height="3.62" fill="#4472c4"/>
<rect x="961.08" y="530.75" width="5.60" height="3.62" fill="#5b9bd5"/>
<text x="71.53" y="550.90" font-size="7.54" fill="#595959" textLength="11.30" lengthAdjust="spacingAndGlyphs">Jan</text>
<text x="85.88" y="550.90" font-size="7.54" fill="#595959" textLength="12.08" lengthAdjust="spacingAndGlyphs">Feb</text>
<text x="100.81" y="550.90" font-size="7.54" fill="#595959" textLength="12.07" lengthAdjust="spacingAndGlyphs">Mar</text>
<text x="116.70" y="550.90" font-size="7.54" fill="#595959" textLength="10.91" lengthAdjust="spacingAndGlyphs">Apr</text>
<text x="130.24" y="550.90" font-size="7.54" fill="#595959" textLength="13.24" lengthAdjust="spacingAndGlyphs">May</text>
<text x="146.69" y="550.90" font-size="7.54" fill="#595959" textLength="11.30" lengthAdjust="spacingAndGlyphs">Jun</text>
<text x="162.90" y="550.90" font-size="7.54" fill="#595959" textLength="8.96" lengthAdjust="spacingAndGlyphs">Jul</text>
<text x="176.21" y="550.90" font-size="7.54" fill="#595959" textLength="12.47" lengthAdjust="spacingAndGlyphs">Aug</text>
<text x="191.01" y="550.90" font-size="7.54" fill="#595959" textLength="12.47" lengthAdjust="spacingAndGlyphs">Sep</text>
<text x="206.69" y="550.90" font-size="7.54" fill="#595959" textLength="10.90" lengthAdjust="spacingAndGlyphs">Oct</text>
<text x="220.81" y="550.90" font-size="7.54" fill="#595959" textLength="12.46" lengthAdjust="spacingAndGlyphs">Nov</text>
<text x="235.93" y="550.90" font-size="7.54" fill="#595959" textLength="12.46" lengthAdjust="spacingAndGlyphs">Dec</text>
<text x="251.91" y="550.90" font-size="7.54" fill="#595959" textLength="11.30" lengthAdjust="spacingAndGlyphs">Jan</text>
<text x="266.26" y="550.90" font-size="7.54" fill="#595959" textLength="12.08" lengthAdjust="spacingAndGlyphs">Feb</text>
<text x="281.19" y="550.90" font-size="7.54" fill="#595959" textLength="12.07" lengthAdjust="spacingAndGlyphs">Mar</text>
<text x="297.08" y="550.90" font-size="7.54" fill="#595959" textLength="10.91" lengthAdjust="spacingAndGlyphs">Apr</text>
<text x="310.62" y="550.90" font-size="7.54" fill="#595959" textLength="13.24" lengthAdjust="spacingAndGlyphs">May</text>
<text x="327.07" y="550.90" font-size="7.54" fill="#595959" textLength="11.30" lengthAdjust="spacingAndGlyphs">Jun</text>
<text x="343.28" y="550.90" font-size="7.54" fill="#595959" textLength="8.96" lengthAdjust="spacingAndGlyphs">Jul</text>
<text x="356.59" y="550.90" font-size="7.54" fill="#595959" textLength="12.47" lengthAdjust="spacingAndGlyphs">Aug</text>
<text x="371.39" y="550.90" font-size="7.54" fill="#595959" textLength="12.47" lengthAdjust="spacingAndGlyphs">Sep</text>
<text x="387.07" y="550.90" font-size="7.54" fill="#595959" textLength="10.90" lengthAdjust="spacingAndGlyphs">Oct</text>
<text x="401.19" y="550.90" font-size="7.54" fill="#595959" textLength="12.46" lengthAdjust="spacingAndGlyphs">Nov</text>
<text x="416.31" y="550.90" font-size="7.54" fill="#595959" textLength="12.46" lengthAdjust="spacingAndGlyphs">Dec</text>
<text x="432.29" y="550.90" font-size="7.54" fill="#595959" textLength="11.30" lengthAdjust="spacingAndGlyphs">Jan</text>
<text x="446.64" y="550.90" font-size="7.54" fill="#595959" textLength="12.08" lengthAdjust="spacingAndGlyphs">Feb</text>
<text x="461.57" y="550.90" font-size="7.54" fill="#595959" textLength="12.07" lengthAdjust="spacingAndGlyphs">Mar</text>
<text x="477.46" y="550.90" font-size="7.54" fill="#595959" textLength="10.91" lengthAdjust="spacingAndGlyphs">Apr</text>
<text x="491.00" y="550.90" font-size="7.54" fill="#595959" textLength="13.24" lengthAdjust="spacingAndGlyphs">May</text>
<text x="507.45" y="550.90" font-size="7.54" fill="#595959" textLength="11.30" lengthAdjust="spacingAndGlyphs">Jun</text>
<text x="523.66" y="550.90" font-size="7.54" fill="#595959" textLength="8.96" lengthAdjust="spacingAndGlyphs">Jul</text>
<text x="536.97" y="550.90" font-size="7.54" fill="#595959" textLength="12.47" lengthAdjust="spacingAndGlyphs">Aug</text>
<text x="551.77" y="550.90" font-size="7.54" fill="#595959" textLength="12.47" lengthAdjust="spacingAndGlyphs">Sep</text>
<text x="567.45" y="550.90" font-size="7.54" fill="#595959" textLength="10.90" lengthAdjust="spacingAndGlyphs">Oct</text>
<text x="581.57" y="550.90" font-size="7.54" fill="#595959" textLength="12.46" lengthAdjust="spacingAndGlyphs">Nov</text>
<text x="596.69" y="550.90" font-size="7.54" fill="#595959" textLength="12.46" lengthAdjust="spacingAndGlyphs">Dec</text>
<text x="612.67" y="550.90" font-size="7.54" fill="#595959" textLength="11.30" lengthAdjust="spacingAndGlyphs">Jan</text>
<text x="627.02" y="550.90" font-size="7.54" fill="#595959" textLength="12.08" lengthAdjust="spacingAndGlyphs">Feb</text>
<text x="641.95" y="550.90" font-size="7.54" fill="#595959" textLength="12.07" lengthAdjust="spacingAndGlyphs">Mar</text>
<text x="657.84" y="550.90" font-size="7.54" fill="#595959" textLength="10.91" lengthAdjust="spacingAndGlyphs">Apr</text>
<text x="671.38" y="550.90" font-size="7.54" fill="#595959" textLength="13.24" lengthAdjust="spacingAndGlyphs">May</text>
<text x="687.83" y="550.90" font-size="7.54" fill="#595959" textLength="11.30" lengthAdjust="spacingAndGlyphs">Jun</text>
<text x="704.04" y="550.90" font-size="7.54" fill="#595959" textLength="8.96" lengthAdjust="spacingAndGlyphs">Jul</text>
<text x="717.35" y="550.90" font-size="7.54" fill="#595959" textLength="12.47" lengthAdjust="spacingAndGlyphs">Aug</text>
<text x="732.15" y="550.90" font-size="7.54" fill="#595959" textLength="12.47" lengthAdjust="spacingAndGlyphs">Sep</text>
<text x="747.83" y="550.90" font-size="7.54" fill="#595959" textLength="10.90" lengthAdjust="spacingAndGlyphs">Oct</text>
<text x="761.95" y="550.90" font-size="7.54" fill="#595959" textLength="12.46" lengthAdjust="spacingAndGlyphs">Nov</text>
<text x="777.07" y="550.90" font-size="7.54" fill="#595959" textLength="12.46" lengthAdjust="spacingAndGlyphs">Dec</text>
<text x="793.05" y="550.90" font-size="7.54" fill="#595959" textLength="11.30" lengthAdjust="spacingAndGlyphs">Jan</text>
<text x="807.40" y="550.90" font-size="7.54" fill="#595959" textLength="12.08" lengthAdjust="spacingAndGlyphs">Feb</text>
<text x="822.33" y="550.90" font-size="7.54" fill="#595959" textLength="12.07" lengthAdjust="spacingAndGlyphs">Mar</text>
<text x="838.22" y="550.90" font-size="7.54" fill="#595959" textLength="10.91" lengthAdjust="spacingAndGlyphs">Apr</text>
<text x="851.76" y="550.90" font-size="7.54" fill="#595959" textLength="13.24" lengthAdjust="spacingAndGlyphs">May</text>
<text x="868.21" y="550.90" font-size="7.54" fill="#595959" textLength="11.30" lengthAdjust="spacingAndGlyphs">Jun</text>
<text x="884.42" y="550.90" font-size="7.54" fill="#595959" textLength="8.96" lengthAdjust="spacingAndGlyphs">Jul</text>
<text x="897.73" y="550.90" font-size="7.54" fill="#595959" textLength="12.47" lengthAdjust="spacingAndGlyphs">Aug</text>
<text x="912.53" y="550.90" font-size="7.54" fill="#595959" textLength="12.47" lengthAdjust="spacingAndGlyphs">Sep</text>
<text x="928.21" y="550.90" font-size="7.54" fill="#595959" textLength="10.90" lengthAdjust="spacingAndGlyphs">Oct</text>
<text x="942.33" y="550.90" font-size="7.54" fill="#595959" textLength="12.46" lengthAdjust="spacingAndGlyphs">Nov</text>
<text x="957.45" y="550.90" font-size="7.54" fill="#595959" textLength="12.46" lengthAdjust="spacingAndGlyphs">Dec</text>
<rect x="987.30" y="49.50" width="12.70" height="510.00" fill="#f5f5f5"/>
<rect x="987.30" y="49.50" width="0.80" height="510.00" fill="#e2e2e2"/>
<path d="M991.6 58.5 L994.4 55 L997.2 58.5 Z" fill="#707070"/>
<rect x="991.6" y="62" width="5.6" height="63" rx="2.8" fill="#6e6e6e"/>
<path d="M991.6 553 L994.4 556.5 L997.2 553 Z" fill="#707070"/>
<rect x="0.00" y="559.50" width="1000.00" height="19.50" fill="#e9e9ee"/>
<path d="M19 565.5 L16.5 568.5 L19 571.5" fill="none" stroke="#8a8a8a" stroke-width="1"/>
<path d="M38.5 565.5 L41 568.5 L38.5 571.5" fill="none" stroke="#8a8a8a" stroke-width="1"/>
<circle cx="56.8" cy="568.6" r="0.95" fill="#303030"/>
<circle cx="59.8" cy="568.6" r="0.95" fill="#303030"/>
<circle cx="62.8" cy="568.6" r="0.95" fill="#303030"/>
<rect x="73.40" y="560.50" width="55.30" height="16.00" fill="#f9f69d"/>
<text x="79.21" y="573.00" font-size="9.28" fill="#262626" textLength="44.61" lengthAdjust="spacingAndGlyphs">PP&amp;E 2044</text>
<rect x="135.10" y="560.50" width="88.80" height="16.00" fill="#f9f69d"/>
<text x="140.71" y="573.00" font-size="9.28" fill="#262626" textLength="77.10" lengthAdjust="spacingAndGlyphs">OPEX Costing 2044</text>
<rect x="230.00" y="560.50" width="89.40" height="16.00" fill="#e4e6ec"/>
<text x="236.48" y="573.00" font-size="9.28" fill="#262626" textLength="75.54" lengthAdjust="spacingAndGlyphs">Key Metrics Charts</text>
<rect x="323.00" y="560.50" width="102.00" height="16.00" fill="#e4e6ec"/>
<text x="329.71" y="573.00" font-size="9.28" fill="#262626" textLength="89.41" lengthAdjust="spacingAndGlyphs">Sales Summary Charts</text>
<rect x="488.00" y="560.50" width="28.00" height="16.00" fill="#e4e6ec"/>
<text x="494.16" y="573.00" font-size="9.28" fill="#262626" textLength="15.95" lengthAdjust="spacingAndGlyphs">BEA</text>
<rect x="521.80" y="560.50" width="47.60" height="16.00" fill="#f9f69d"/>
<text x="527.12" y="573.00" font-size="9.28" fill="#262626" textLength="37.19" lengthAdjust="spacingAndGlyphs">Expenses</text>
<rect x="575.90" y="560.50" width="89.10" height="16.00" fill="#f9f69d"/>
<text x="581.26" y="573.00" font-size="9.28" fill="#262626" textLength="78.67" lengthAdjust="spacingAndGlyphs">COGS Assumptions</text>
<rect x="671.80" y="560.50" width="96.60" height="16.00" fill="#f9f69d"/>
<text x="677.40" y="573.00" font-size="9.28" fill="#262626" textLength="85.22" lengthAdjust="spacingAndGlyphs">Salaries Assumptions</text>
<rect x="773.80" y="560.50" width="57.00" height="16.00" fill="#f9f69d"/>
<text x="780.17" y="573.00" font-size="9.28" fill="#262626" textLength="45.86" lengthAdjust="spacingAndGlyphs">CAPS Table</text>
<rect x="431.00" y="559.40" width="52.00" height="17.20" fill="#ffffff"/>
<text x="436.06" y="571.00" font-size="9.28" fill="#1f1f1f" textLength="42.55" lengthAdjust="spacingAndGlyphs" font-weight="bold">KPI Charts</text>
<rect x="436.60" y="573.80" width="41.70" height="1.30" fill="#1e7145"/>
<text x="842.86" y="572.70" font-size="8.99" fill="#262626" textLength="37.37" lengthAdjust="spacingAndGlyphs">Chart Dat</text>
<circle cx="887.8" cy="568.6" r="0.9" fill="#303030"/>
<circle cx="890.8" cy="568.6" r="0.9" fill="#303030"/>
<circle cx="893.8" cy="568.6" r="0.9" fill="#303030"/>
<path d="M907.6 568.5 L915 568.5 M911.3 564.8 L911.3 572.2" stroke="#303030" stroke-width="1"/>
<circle cx="932" cy="565.8" r="0.75" fill="#555555"/>
<circle cx="932" cy="568.6" r="0.75" fill="#555555"/>
<circle cx="932" cy="571.4" r="0.75" fill="#555555"/>
<path d="M950 566.2 L947 568.6 L950 571 Z" fill="#444444"/>
<rect x="953.8" y="566" width="20.4" height="5.2" rx="2.6" fill="#6e6e6e"/>
<path d="M982 566.2 L985 568.6 L982 571 Z" fill="#444444"/>
<rect x="0.00" y="579.00" width="1000.00" height="11.00" fill="#f3f3f3"/>
<text x="7.49" y="589.00" font-size="7.25" fill="#444444" textLength="18.52" lengthAdjust="spacingAndGlyphs">Ready</text>
<rect x="40" y="583.2" width="8.6" height="7" fill="none" stroke="#666" stroke-width="0.9"/>
<rect x="40.00" y="583.20" width="8.60" height="1.80" fill="#666"/>
<rect x="42.00" y="586.40" width="1.20" height="1.20" fill="#555"/>
<rect x="45.40" y="586.40" width="1.20" height="1.20" fill="#555"/>
<rect x="43.60" y="588.20" width="1.60" height="1.60" fill="#333"/>
<path d="M61 584 L69 584 M62.2 584 L64.2 589.5 M67.8 584 L65.8 589.5 M64 587 L65.5 589 L69.5 585" fill="none" stroke="#555" stroke-width="0.9"/>
<text x="72.34" y="589.20" font-size="7.54" fill="#222222" textLength="78.36" lengthAdjust="spacingAndGlyphs" font-weight="bold">Accessibility: Investigate</text>
<rect x="808.00" y="580.00" width="22.00" height="10.00" fill="#e3e3e3"/>
<rect x="815" y="583" width="9" height="7" fill="none" stroke="#555" stroke-width="0.9"/>
<rect x="815.00" y="585.40" width="9.00" height="0.70" fill="#555"/>
<rect x="818.00" y="583.00" width="0.70" height="7.00" fill="#555"/>
<rect x="821.00" y="583.00" width="0.70" height="7.00" fill="#555"/>
<rect x="840.5" y="583" width="9" height="7" fill="none" stroke="#555" stroke-width="0.9"/>
<rect x="840.50" y="585.40" width="9.00" height="0.70" fill="#555"/>
<path d="M866.5 583.5 L875.5 583.5 M867.3 583.5 L867.3 590 M874.7 583.5 L874.7 590 M870 583.5 L870 588 L872 588 L872 583.5" fill="none" stroke="#555" stroke-width="0.9"/>
<rect x="889.50" y="586.50" width="3.50" height="0.80" fill="#555"/>
<rect x="896.30" y="586.60" width="71.50" height="0.70" fill="#888888"/>
<rect x="928.60" y="583.50" width="1.80" height="6.50" fill="#444444"/>
<rect x="965.50" y="586.50" width="3.50" height="0.80" fill="#555"/>
<text x="978.17" y="589.40" font-size="7.25" fill="#444444" textLength="21.61" lengthAdjust="spacingAndGlyphs">100%</text>
</svg>
</body></html>
